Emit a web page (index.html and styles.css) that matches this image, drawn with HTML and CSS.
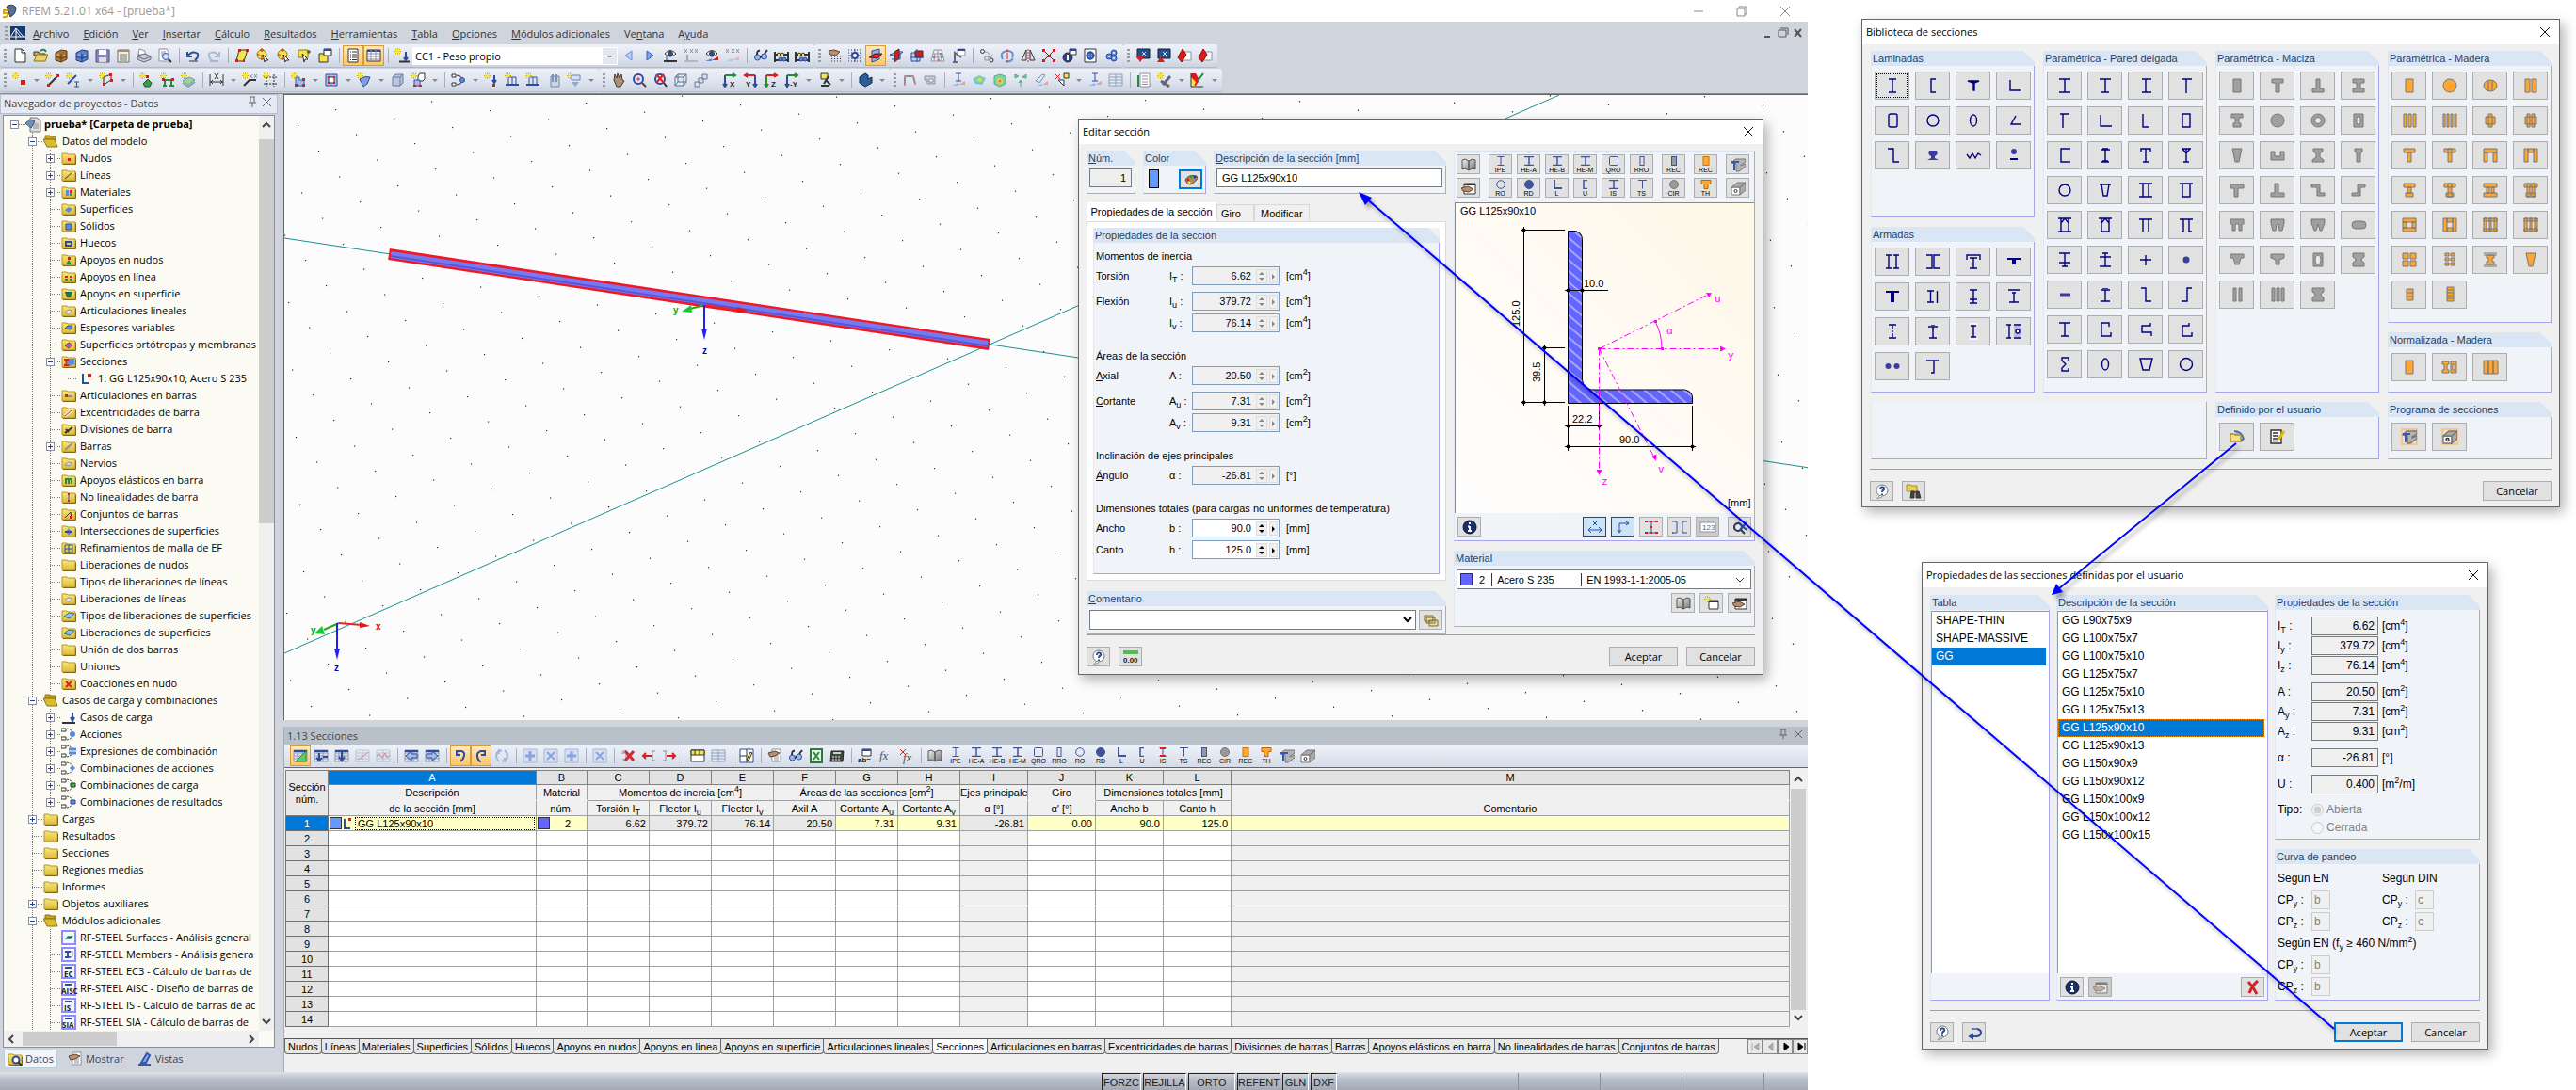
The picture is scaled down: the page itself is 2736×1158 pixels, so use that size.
FILE: index.html
```html
<!DOCTYPE html>
<html lang="es">
<head>
<meta charset="utf-8">
<title>RFEM 5.21.01 x64 - [prueba*]</title>
<link rel="stylesheet" href="styles.css">
</head>
<body>
<svg class="defs" aria-hidden="true">
<defs>
<linearGradient id="gf" x2="0" y2="1"><stop stop-color="#f8e878"/><stop offset="1" stop-color="#dcb93a"/></linearGradient>
<linearGradient id="gm" x2="1" y2="1"><stop stop-color="#eee"/><stop offset="1" stop-color="#777"/></linearGradient>
<pattern id="hatch" width="9" height="9" patternUnits="userSpaceOnUse" patternTransform="rotate(-50)"><rect width="9" height="9" fill="#6464ff"/><path d="M4 0v9" stroke="#e8e8ff"/></pattern>
</defs>
<symbol id="f"><path d="M1 3h5l1 1h8v10H1z" fill="url(#gf)" stroke="#b8951f"/><path d="M2 14.500h13.500v-9" stroke="#7d6a20"/></symbol>
<symbol id="fo"><path d="M2 2h5l1 1h5v3H2z" fill="#c8a620" stroke="#8b7518"/><path d="M0 6h12l3 8H4z" fill="#d9bd2e" stroke="#8b7518"/></symbol>
<symbol id="star"><path d="M3.500 0v7M0 3.500h7M1 1l5 5M6 1l-5 5" stroke="#c9b200"/><circle cx="3.500" cy="3.500" r="2" class="fy"/></symbol>
<symbol id="new"><path d="M3 1h7l4 4v10H3z" class="fw K"/><path d="M10 1v4h4" class="K"/></symbol>
<symbol id="open"><path d="M1 4h5l1 2h6v2H1z" fill="#d0b040" class="K"/><path d="M1 14l3-7h12l-3 7z" fill="#ead46a" stroke="#8b7518"/><path d="M8 3q4-3 6 1" class="G w2"/></symbol>
<symbol id="box"><path d="M2 5l6-3 6 1v9l-6 3-6-2z" fill="#a9743a" stroke="#5f3b14"/><path d="M8 6v9M2 9l6 2 6-2" stroke="#5f3b14"/><path d="M4 7h2M10 8h2" class="fy" stroke="#fd6"/></symbol>
<symbol id="boxb"><path d="M2 5l6-3 6 1v9l-6 3-6-2z" fill="#5a82d0" stroke="#1f3a7c"/><path d="M8 6v9M2 9l6 2 6-2" stroke="#1f3a7c"/><path d="M4 7h2M10 8h2" stroke="#dde"/></symbol>
<symbol id="save"><path d="M1 2h14v13H1z" fill="#8a84b8" stroke="#555080"/><path d="M4 2h8v5H4z" class="fw"/><path d="M4 10h8v5H4z" fill="#ddd"/></symbol>
<symbol id="list"><path d="M2 2h12v13H2z" fill="#f4efe6" stroke="#7b6a58"/><path d="M2 2h12v2H2z" fill="#a08c78"/><path d="M4 7h8M4 9h8M4 11h8M4 13h8" stroke="#777"/></symbol>
<symbol id="print"><path d="M3 1l6 2v5L2 7z" class="fw A"/><path d="M1 8l8-2 6 3v3l-7 3-7-3z" fill="#c8ccd8" stroke="#667"/><path d="M1 9l7 3 7-3" stroke="#667"/></symbol>
<symbol id="prev"><path d="M2 1h8l2 3v10H2z" class="fw A"/><path d="M4 4h5M4 6h5M4 8h3" class="A"/><circle cx="9" cy="9" r="3.500" fill="#cfe0ff" class="N"/><path d="M12 12l3 3" class="K w2"/></symbol>
<symbol id="undo"><path d="M2 4v5h5M2 9q5-7 11-3 1 4-3 7" class="N w2"/><path d="M4 14h9" class="K"/></symbol>
<symbol id="redo"><path d="M14 4v5H9M14 9q-5-7-11-3-1 4 3 7" stroke="#a9bcd0" stroke-width="2"/><path d="M4 14h9" class="A"/></symbol>
<symbol id="para"><path d="M5 2h9l-4 12H2z" class="fy K"/><path d="M1 12h3v3H1zM4 1h3v3H4zM12 1h3v3h-3zM9 12h2v3H9z" class="fr"/></symbol>
<symbol id="circ"><circle cx="7" cy="7" r="5" class="fy" stroke="#8a7a00"/><path d="M5 2h4M7 0v4M7 7v6M2 7h3" class="R"/><path d="M8 7l6 6h-3l-1 2z" class="fw K"/></symbol>
<symbol id="selr"><path d="M2 2h10v8H2z" class="fy" stroke="#8a7a00"/><path d="M11 4h4M13 2v4" class="K"/><path d="M6 6l6 6h-3l-1 3z" class="fw K"/></symbol>
<symbol id="win"><path d="M2 6h9v9H2z" class="fy K"/><path d="M7 1h8v7H7z" class="fw K"/><path d="M7 2h8" class="N w2"/></symbol>
<symbol id="tl"><path d="M3 1h10v14H3z" class="fw K"/><path d="M5 4h1M5 7h1M5 10h1M5 12.500h1M7 4h5M7 7h5M7 10h5M7 12.500h5" class="K"/></symbol>
<symbol id="tt"><path d="M1 2h14v12H1z" class="fw K"/><path d="M1 3h14" class="N w2"/><path d="M1 6h14M1 9h14M1 12h14M5 2v12M10 2v12" class="A"/></symbol>
<symbol id="ld"><use href="#star"/><path d="M5 14.500h11" class="K w2"/><path d="M12 4v9M10 10l2 3 2-3" class="N w2"/></symbol>
<symbol id="pl"><path d="M11 3v10L4 8z" fill="#b9cdf2" stroke="#6f90d2"/></symbol>
<symbol id="pr"><path d="M5 3v10l7-5z" fill="#7ba2ea" stroke="#3a62b8"/></symbol>
<symbol id="eye"><path d="M2 6q6-7 12 0-6 6-12 0z" class="fw K"/><circle cx="8" cy="6" r="2.500" fill="#244fb0" class="K"/><path d="M1 14h14" class="K w2"/><path d="M4 8v5" class="N"/></symbol>
<symbol id="eye2"><path d="M2 6q6-7 12 0-6 6-12 0z" class="fw K"/><circle cx="8" cy="6" r="2.500" fill="#244fb0" class="K"/><path d="M1 14h7V11z" class="fb"/><path d="M8 13h7v-4z" class="fr"/></symbol>
<symbol id="xx"><path d="M1 1l3 4M4 1L1 5M7 1l3 4M10 1L7 5M12 1l3 4M15 1l-3 4M1 14h14" class="A"/><path d="M4 7v6" stroke="#9ab" stroke-width="2"/></symbol>
<symbol id="xx2"><path d="M1 1l3 4M4 1L1 5M7 1l3 4M10 1L7 5M12 1l3 4M15 1l-3 4" class="A"/><path d="M1 14h7v-3z" fill="#b6c4ea"/><path d="M8 13h7V9z" fill="#eab6b6"/></symbol>
<symbol id="gl"><circle cx="4.500" cy="10" r="3" fill="#9db6ee" class="N"/><circle cx="11.500" cy="9" r="3" fill="#9db6ee" class="N"/><path d="M4 7q0-5 3-4M12 6q3-4 3-4M7 10l2-1" class="K w2"/></symbol>
<symbol id="ab"><path d="M1 4v11M15 4v11M1 7h14M1 13h14" class="K w2"/><circle cx="5" cy="7" r="1.800" class="fy K"/><circle cx="9" cy="7" r="1.800" class="fy K"/><circle cx="7" cy="12" r="2" class="fb N"/><circle cx="11" cy="12" r="2" class="fb N"/></symbol>
<symbol id="hg"><path d="M2 9h13M2 11.500h13M2 14h13" class="K" stroke-dasharray="1 2"/><path d="M2 3l6-1 6 2-4 4-6-1z" fill="#b98f6c" stroke="#5d4030"/></symbol>
<symbol id="sg"><path d="M1 2h14M1 5h14M1 11h14M1 14h14" class="K" stroke-dasharray="1 2"/><path d="M8 1v14M1 8h14" class="N"/><circle cx="8" cy="8" r="3" class="fw N w2"/></symbol>
<symbol id="pa"><path d="M4 3l8-2v11l-8 3z" fill="#8fb2f2" class="N"/><path d="M1 10l6-4h8l-5 5z" class="fr K"/></symbol>
<symbol id="pb"><path d="M1 7l8-3h6l-6 5z" fill="#bcd0f8" class="N"/><path d="M6 4l5-3v10l-5 4z" class="fr K"/><path d="M3 12h9V5" class="N"/></symbol>
<symbol id="pc"><path d="M2 5h9v9H2z" fill="#bcd0f8" class="N"/><path d="M6 3h8v7H6z" class="fr K"/><path d="M1 10h14M8 1v14" class="N"/></symbol>
<symbol id="ms"><path d="M4 2h8l3 12H1zM3 6h10M2 10h12M8 2v12M5 6l-1 8M11 6l1 8" fill="#e6eefb" stroke="#8899aa"/><path d="M3 9h2v2H3zM10 5h2v2h-2zM8 12h2v2H8z" fill="#e55"/></symbol>
<symbol id="cf"><path d="M7 1h8v7H7z" class="fw A"/><path d="M7 2h8" class="N w2"/><path d="M4 15V5l7 5M2 15h5" stroke="#667" stroke-width="2"/></symbol>
<symbol id="mv"><circle cx="3.500" cy="3.500" r="2" class="K"/><circle cx="13" cy="13" r="2" class="K"/><path d="M6 4q5 0 6 6M9 8l3 3 2-4M6 9h4v4H6z" class="A"/></symbol>
<symbol id="rt"><path d="M3 12q-4-7 4-9 9 0 6 7M6 14q5 2 8-3" stroke="#6b8fd0" stroke-width="2"/><path d="M8 1v14" class="R" stroke-dasharray="3 1"/></symbol>
<symbol id="mi"><path d="M6 2v11H1zM10 2v11h5z" fill="#dde" class="K"/><path d="M8 1v14" class="R" stroke-dasharray="2 1"/></symbol>
<symbol id="ix"><path d="M2 2l12 12M14 2L2 14" class="K"/><path d="M1 1h3v3H1zM12 1h3v3h-3zM1 12h3v3H1zM12 12h3v3h-3zM7 7h3v3H7z" class="fr"/></symbol>
<symbol id="in"><circle cx="8" cy="8" r="7" fill="#1b2f66" stroke="#0a1436"/><path d="M8 3v2M8 7v5M6 7.500h2M6 12h4" stroke="#fff" stroke-width="2"/></symbol>
<symbol id="iw"><circle cx="6" cy="10" r="5" fill="#2c4288" class="K"/><path d="M6 7v1M6 9v4" stroke="#fff" stroke-width="2"/><path d="M8 1h7v6H8z" class="fw K"/><path d="M8 2h7" class="N w2"/></symbol>
<symbol id="gp"><path d="M2 1h12v14H2z" class="fw K"/><circle cx="8" cy="8" r="3.500" fill="#7ba2ea" class="N w2"/><path d="M8 3v10M3 8h10" class="N"/></symbol>
<symbol id="gs"><circle cx="11" cy="5" r="3" class="fb N"/><circle cx="6" cy="9" r="3" class="fb N"/><circle cx="11" cy="11" r="3" class="fb N"/><circle cx="11" cy="5" r="1" class="fw"/><circle cx="6" cy="9" r="1" class="fw"/><circle cx="11" cy="11" r="1" class="fw"/></symbol>
<symbol id="d1"><path d="M2 1h13v10H2z" fill="#26508c" stroke="#123"/><path d="M7 4l2 2 2-2M7 8l2-2 2 2" stroke="#cfe0ff"/><path d="M1 9h8l-4 6z" class="fr"/></symbol>
<symbol id="d2"><path d="M2 1h13v10H2z" fill="#26508c" stroke="#123"/><path d="M7 4l2 2 2-2M7 8l2-2 2 2" stroke="#cfe0ff"/><path d="M1 15h8L5 9z" class="fr"/></symbol>
<symbol id="d3"><path d="M7 4h8v9H7z" class="fw A"/><path d="M6 1l4 6-5 8-4-5z" class="fr" stroke="#811"/></symbol>
<symbol id="nd"><use href="#star"/><path d="M9 8h5v5H9z" class="fr"/></symbol>
<symbol id="ln"><use href="#star"/><path d="M3 14L14 3" class="K w2"/><path d="M2 12h3v3H2zM12 2h3v3h-3z" class="fr"/></symbol>
<symbol id="mb"><use href="#star"/><path d="M2 12L11 3" class="N w2"/><path d="M9 10h5M11.500 10v5M9 15h5" class="N"/></symbol>
<symbol id="pg"><use href="#star"/><path d="M5 5l8-3v6l-8 5z" class="K"/><path d="M4 11h3v3H4zM11 1h3v3h-3zM12 7h3v3h-3z" class="fr"/></symbol>
<symbol id="ns"><use href="#star"/><path d="M9 7l4 4-2 4H6l-2-3z" fill="#3c9a4c" stroke="#185a24"/><path d="M7 3h3v3H7z" class="fr"/></symbol>
<symbol id="ls"><use href="#star"/><path d="M3 8h11M5 9v5M12 9v5M3 14h4M10 14h5" class="G w2"/><path d="M2 6h3v3H2zM12 6h3v3h-3z" class="fr"/></symbol>
<symbol id="ss"><use href="#star"/><path d="M2 9l7-4 6 3-7 5z" fill="#a8cf9f" stroke="#6a9a88"/><path d="M2 11l6 4 7-5" stroke="#7fa6b8" stroke-width="2"/></symbol>
<symbol id="dm"><path d="M1 2v12M15 2v12M1 10h14M4 8l-2 2 2 2M12 8l2 2-2 2M6 1l4 6M10 1L6 7" class="K"/></symbol>
<symbol id="dx"><use href="#star"/><path d="M8 2l3 4M11 2L8 6M13 2l3 4M16 2l-3 4" class="A"/><path d="M2 14l6-6h7" class="K w2"/></symbol>
<symbol id="gd"><path d="M1 5h14M1 12h14M4 2v13M12 2v13" class="K" stroke-dasharray="2 1"/><use href="#star"/></symbol>
<symbol id="sf"><use href="#star"/><path d="M5 5v9h9V8H9V5z" fill="#a6bcec" stroke="#4060a0"/><path d="M4 12h3v3H4zM12 12h3v3h-3zM12 6h3v3h-3z" class="fr"/></symbol>
<symbol id="op"><path d="M2 2h12v12H2z" fill="#a6bcec" class="N"/><path d="M5 5h6v6H5z" class="fw K"/><path d="M4 4h2v2H4zM10 10h2v2h-2zM10 4h2v2h-2zM4 10h2v2H4z" class="fr"/></symbol>
<symbol id="cs"><use href="#star"/><path d="M3 7q6-4 11-2l-3 7-4 3z" fill="#7f9fe2" class="N"/></symbol>
<symbol id="cb"><path d="M3 5l3-3h8v9l-3 3H3z" fill="#b8c6de" stroke="#66789a"/><path d="M3 5h8v9M11 5l3-3" stroke="#66789a"/></symbol>
<symbol id="cn"><use href="#star"/><path d="M8 4l2-3h5v6l-2 2H8z" class="fw K"/><path d="M4 8h6v6H4z" fill="#a6bcec" class="N"/><path d="M3 13h3v2H3zM9 13h3v2H9z" class="fr"/></symbol>
<symbol id="lc"><path d="M1 2h4v3H1zM1 11h4v3H1z" class="fw K"/><path d="M6 3q5 0 6 4M6 13q5 0 6-4" class="K"/><circle cx="12" cy="8" r="2.500" class="fb N"/></symbol>
<symbol id="na"><use href="#star"/><path d="M11 3v7M9 8l2 3 2-3" class="N w2"/><path d="M9 12h3v3H9z" class="fr"/></symbol>
<symbol id="ml"><path d="M1 13h14" class="N w2"/><path d="M4 5v7M8 5v7M12 5v7M4 5h8" class="N"/><use href="#star"/></symbol>
<symbol id="sl"><path d="M5 4h9v11H5z" fill="#c8d4e8" stroke="#7788a0"/><path d="M7 2v8M11 2v8" stroke="#7d93ba" stroke-width="2"/></symbol>
<symbol id="vl"><use href="#star"/><path d="M5 3h9v5H5z" fill="#d8e2f4" stroke="#6f86ae"/><path d="M5 10h8l-4 5z" fill="#8aa8dc"/></symbol>
<symbol id="hd"><path d="M3 8l1-6 2 4 1-5 2 5 2-4 1 6 2 1-4 6H6z" fill="#a99177" stroke="#4b3a2a"/></symbol>
<symbol id="zm"><circle cx="7" cy="7" r="5" fill="#dbe7ff" class="N w2"/><path d="M11 11l4 4" stroke="#732" stroke-width="2"/><path d="M5 7h4M7 5v4" class="R"/></symbol>
<symbol id="zx"><circle cx="8" cy="7" r="5" fill="#dbe7ff" class="N w2"/><path d="M12 11l3 4" class="K w2"/><path d="M4 2l8 9M12 2l-8 9" class="R w2"/></symbol>
<symbol id="zd"><circle cx="6" cy="8" r="4" fill="#dbe7ff" class="K w2"/><path d="M9 11l4 4" class="K w2"/><path d="M6 3l9 8M15 3L8 11" class="N w2"/></symbol>
<symbol id="bx"><path d="M2 5l3-3h9v8l-3 4H2zM2 5h9v9M11 5l3-3M5 2v8h9M2 14l3-4" fill="#e3eaf6" stroke="#5c6e92"/></symbol>
<symbol id="c3"><path d="M1 10h5v5H1zM5 6h5v5H5zM9 2h5v5H9z" fill="#d8e0ee" stroke="#66789a"/></symbol>
<symbol id="ax"><path d="M3 15V3M1 12l2 3 2-3" class="N w2"/><path d="M3 3h11M11 1l3 2-3 2" class="G w2"/></symbol>
<symbol id="ay"><path d="M13 15V3M11 12l2 3 2-3" class="N w2"/><path d="M13 3H2M5 1L2 3l3 2" class="R w2"/></symbol>
<symbol id="az"><path d="M3 15V3M1 12l2 3 2-3" class="G w2"/><path d="M3 3h11M11 1l3 2-3 2" class="R w2"/></symbol>
<symbol id="pn"><path d="M4 1h7v6H4z" class="fy K"/><path d="M12 4l-5 8M4 14h9M9 8l5 5" class="K w2"/></symbol>
<symbol id="cc"><path d="M2 5l6-4 3 2v4l4-2v6l-7 4-6-4z" fill="#2d5f96" stroke="#0e2748"/></symbol>
<symbol id="fr"><path d="M3 14V4h9l2 8" class="A w2"/><path d="M2 12h2v2H2zM2 3h2v2H2zM11 3h2v2h-2zM13 11h2v2h-2z" fill="#e58a8a"/></symbol>
<symbol id="ky"><path d="M2 4h11v8H5V8H2z" fill="#ccd" class="A"/><path d="M7 7h4v3H7z" class="fw A"/></symbol>
<symbol id="dg"><path d="M5 1h6M8 1v8M5 9h6" class="N"/><path d="M1 14h7v-3z" fill="#9fb0ee"/><path d="M8 13h7v-4z" fill="#ee9f9f"/></symbol>
<symbol id="is"><path d="M1 7l7-4 7 3-4 7-7-1z" fill="#66c8e8"/><path d="M3 8l6-4 4 3-3 4z" fill="#8fdc6a"/><path d="M5 8l4-2 2 2-2 2z" fill="#f2d34b"/></symbol>
<symbol id="ib"><path d="M2 4l6-2 6 2v8l-6 3-6-3z" fill="#7fd49a" stroke="#5a8"/><circle cx="8" cy="9" r="3" fill="#f2d34b"/><circle cx="8" cy="9" r="1.500" fill="#e66"/></symbol>
<symbol id="ga"><path d="M6 4l-4-2v4zM10 5l4-3v4zM8 8v7M6 11l2-3 2 3" fill="#7c9" stroke="#5a8"/></symbol>
<symbol id="sp"><path d="M2 9l7-7 3 1-6 8z" fill="#dbe4f4" stroke="#7f90b0"/><path d="M3 14h6v-2z" fill="#9fb0ee"/><path d="M9 13h6V9z" fill="#ee9f9f"/></symbol>
<symbol id="pk"><path d="M1 2l5 5M6 2L1 7" class="R"/><path d="M10 1h5v5h-5z" class="fy K"/><path d="M4 8h6v6z" class="fw K"/></symbol>
<symbol id="gr"><path d="M1 2h14v12H1zM1 5h14M1 8h14M1 11h14M8 2v12" fill="#e4eaf4" stroke="#8fa0be"/></symbol>
<symbol id="gk"><path d="M1 2h14v12H1zM1 5h14M1 8h14M1 11h14M5 2v12M10 2v12" fill="#dfe8f6" stroke="#8c99ad"/><path d="M1 3h14" class="N w2"/></symbol>
<symbol id="rp"><path d="M4 1h10v14H4z" class="fw A"/><path d="M6 4h6M6 7h6M6 10h6M6 12.500h6" class="A"/><path d="M2 3v12" class="G w2"/></symbol>
<symbol id="wr"><use href="#star"/><path d="M6 13l8-9M4 9l9 6" stroke="#667" stroke-width="3"/></symbol>
<symbol id="cl"><path d="M1 1h5l4 7-4 6H1z" class="fr"/><path d="M1 5l5 5-2 5H1z" class="fy"/><path d="M1 1v14h13" class="K"/><path d="M8 9l6-8" class="G w2"/></symbol>
<symbol id="aL"><path d="M14 6H8V3L2 8l6 5v-3h6z" fill="#a6bcec" class="N"/></symbol>
<symbol id="aR"><path d="M2 6h6V3l6 5-6 5v-3H2z" fill="#a6bcec" class="N"/></symbol>
<symbol id="uL"><path d="M4 3h5q4 1 3 5-1 4-4 6M4 2v5h4" class="N w2"/></symbol>
<symbol id="uR"><path d="M12 3H8Q3 4 4 9t4 5M12 2v5H8" class="N w2"/></symbol>
<symbol id="rf"><path d="M5 2q-6 6 0 12M11 2q6 6 0 12M8 3L5 2v4M8 13l3 1v-4" stroke="#a6b8d8" stroke-width="2"/></symbol>
<symbol id="ps"><path d="M1 1h14v14H1z" fill="#d6e0f2" stroke="#aab8d0"/><path d="M8 3v10M3 8h10" stroke="#8aa4e0" stroke-width="3"/></symbol>
<symbol id="mu"><path d="M1 1h14v14H1z" fill="#d6e0f2" stroke="#aab8d0"/><path d="M4 4l8 8M12 4l-8 8" stroke="#8aa4e0" stroke-width="2"/></symbol>
<symbol id="xr"><path d="M2 3h4v9H2M1 5h5" class="A"/><path d="M5 3l9 10M14 3L5 13" stroke="#d22a2a" stroke-width="3"/></symbol>
<symbol id="x1"><path d="M12 2v12M12 3h3M12 13h3" class="A"/><path d="M11 8H2M5 5L2 8l3 3" class="R w2"/></symbol>
<symbol id="x2"><path d="M4 2v12M1 3h3M1 13h3" class="A"/><path d="M5 8h9M11 5l3 3-3 3" class="R w2"/></symbol>
<symbol id="ty"><path d="M1 2h14v12H1z" class="fw K"/><path d="M1 2h14v5H1z" class="fy K"/><path d="M5 2v5M10 2v5" class="K"/></symbol>
<symbol id="bo"><path d="M1 1h14v14H1z" class="fw N"/><path d="M8 1v14M1 8h7" class="K"/><path d="M8 12l4-8 2 1-4 8z" class="fy K"/></symbol>
<symbol id="ha"><path d="M5 1h9v13H5z" class="fw A"/><path d="M7 8h5M7 10h5M7 12h5" class="A"/><path d="M1 5l7-2 5 2-5 3-5 1z" fill="#b98f6c" stroke="#5d4030"/></symbol>
<symbol id="xl"><path d="M2 1h12v14H2z" fill="#e5f4e5" stroke="#2b7c3c" stroke-width="2"/><path d="M5 4l6 8M11 4l-6 8" class="G w2"/></symbol>
<symbol id="ca"><path d="M2 3h13l-1 11H1z" fill="#444" stroke="#222"/><path d="M4 5h8" stroke="#bdb" stroke-width="2"/><path d="M3 9h9M3 12h9" stroke="#eee" stroke-dasharray="2 1"/></symbol>
<symbol id="bk"><path d="M1 3l3-1 4 2v10l-4-2-3 1zM15 3l-3-1-4 2v10l4-2 3 1z" fill="url(#gm)" stroke="#555"/></symbol>
<symbol id="hn"><path d="M3 3h12v11H3z" class="fw K"/><path d="M3 4h12" class="K w2"/><path d="M0 8l7-2 6 3-5 3-6-1z" fill="#b98f6c" stroke="#5d4030"/></symbol>
<symbol id="s1"><path d="M1 6l4-4h11v3l-5 3v1l5-2v3l-7 5H6V7z" fill="#b4b4b4" stroke="#777"/><path d="M1 5h8M4 5v9" stroke="#3558b0" stroke-width="2"/></symbol>
<symbol id="s2"><path d="M1 7h9v8H1z" class="fw" stroke="#777"/><path d="M1 7l6-5h9l-6 5zM10 7l6-5v8l-6 5z" fill="#aaa" stroke="#777"/><circle cx="5.500" cy="11" r="1.500" stroke="#333"/></symbol>
<symbol id="hp"><circle cx="8" cy="7" r="6" class="fw" stroke="#777"/><path d="M5 13l-2 3 5-2" class="fw A"/><path d="M6 6q0-3 2.500-2.500T10 6q-2 1-2 3M8 10.500v1.500" class="N w2"/></symbol>
<symbol id="un"><path d="M5 4h6q4 1 4 4t-4 4H3M3 12l3-2v4z" class="N w2"/><path d="M5 4h6" stroke="#9db6ee"/></symbol>
<symbol id="p1"><path d="M3.500.5h7M7 .5v9M3.500 9.500h7"/></symbol>
<symbol id="p2"><path d="M2 .5h10M7 .5v9M2 9.500h10" stroke-width="1.500"/></symbol>
<symbol id="p3"><rect x="2.500" y=".5" width="9" height="9" rx="1"/></symbol>
<symbol id="p4"><rect x="5" y=".5" width="4" height="9"/></symbol>
<symbol id="p5"><circle cx="7" cy="5" r="4.300"/></symbol>
<symbol id="p6"><circle cx="7" cy="5" r="4.500" fill="#40549c"/></symbol>
<symbol id="p7"><path d="M4 0v9h8" stroke-width="2"/></symbol>
<symbol id="p8"><path d="M9 .5H5v9h4" stroke-width="1.500"/></symbol>
<symbol id="p9"><path d="M3 .5h9M7.500 .5v9"/></symbol>
<symbol id="pa1"><rect x="4.500" y=".5" width="5" height="9" fill="#999"/></symbol>
<symbol id="pa2"><circle cx="7" cy="5" r="4.500" fill="#999" stroke="#777"/></symbol>
<symbol id="pa3"><rect x="4" y=".5" width="6" height="9" fill="#fa3" stroke="#c70"/></symbol>
<symbol id="pa4"><path d="M2 .5h10v4H9v5H5v-5H2z" fill="#fa3" stroke="#b60"/></symbol>
<symbol id="mod"><path d="M1 1h14v14H1z" fill="#f4f6fb" stroke="#8c8cff" stroke-width="2"/></symbol>
<symbol id="cmb"><path d="M0 2h5v3H0zM0 11h5v3H0z" class="fw K"/><path d="M6 2q5 1 6 4M6 14q5-1 6-4" class="K" stroke-dasharray="2 1"/></symbol>
</svg>

<div class="page">
<main class="app">
  <header class="title"><svg><path d="M5 3q6-4 10 1 0 7-6 10z" fill="#5a6c98" stroke="#2a3550"/><path d="M7 7H2v3q5-1 4 2-1 3-5 2" stroke="#d9a400" stroke-width="2"/></svg><span>RFEM 5.21.01 x64 - [prueba*]</span>
    <div class="wb"><button><svg><path d="M3 8h10"/></svg></button><button><svg><path d="M3 5h8v8H3zM5 5V3h8v8h-2"/></svg></button><button><svg><path d="M3 3l10 10M13 3L3 13"/></svg></button></div></header>
  <nav class="menu"><i class="grip"></i><svg><path d="M0 1h16v14H0z" fill="#1c3a72"/><path d="M0 12h16M6 3v12M6 3L1 11M6 3l8 9M6 6l5 6" stroke="#fff"/></svg>
    <a href="#"><u>A</u>rchivo</a><a href="#"><u>E</u>dición</a><a href="#"><u>V</u>er</a><a href="#"><u>I</u>nsertar</a><a href="#"><u>C</u>álculo</a><a href="#"><u>R</u>esultados</a><a href="#"><u>H</u>erramientas</a><a href="#"><u>T</u>abla</a><a href="#"><u>O</u>pciones</a><a href="#"><u>M</u>ódulos adicionales</a><a href="#">Ve<u>n</u>tana</a><a href="#">A<u>y</u>uda</a>
    <div class="mdi"><svg><path d="M4 12h6" class="w2"/></svg><svg><path d="M3 5h8v7H3zM5 3h8v7" /></svg><svg><path d="M4 4l7 8M11 4l-7 8" class="w2"/></svg></div></nav>

  <div class="bars">
   <div class="bar"><i class="grip"></i><button><svg><use href="#new"/></svg></button><button><svg><use href="#open"/></svg></button><button><svg><use href="#box"/></svg></button><button><svg><use href="#boxb"/></svg></button><button><svg><use href="#save"/></svg></button><button><svg><use href="#list"/></svg></button><button><svg><use href="#print"/></svg></button><button><svg><use href="#prev"/></svg></button><i class="sep"></i><button><svg><use href="#undo"/></svg></button><button><svg><use href="#redo"/></svg></button><i class="sep"></i><button><svg><use href="#para"/></svg></button><button><svg><use href="#circ"/></svg></button><button><svg><use href="#circ"/></svg></button><button><svg><use href="#selr"/></svg></button><button><svg><use href="#win"/></svg></button><i class="sep"></i><button class="on"><svg><use href="#tl"/></svg></button><button class="on"><svg><use href="#tt"/></svg></button><i class="sep"></i><button><svg><use href="#ld"/></svg></button><select class="lc" aria-label="Caso de carga"><option>CC1 - Peso propio</option></select><button><svg><use href="#pl"/></svg></button><button><svg><use href="#pr"/></svg></button><button><svg><use href="#eye"/></svg></button><button><svg><use href="#xx"/></svg></button><button><svg><use href="#eye2"/></svg></button><button><svg><use href="#xx2"/></svg></button><i class="sep"></i><button><svg><use href="#gl"/></svg></button><button><svg><use href="#ab"/></svg></button><button><svg><use href="#ab"/></svg></button></div>
   <div class="bar"><i class="grip"></i><button><svg><use href="#hg"/></svg></button><button><svg><use href="#sg"/></svg></button><button class="on"><svg><use href="#pa"/></svg></button><button><svg><use href="#pb"/></svg></button><button><svg><use href="#pc"/></svg></button><button><svg><use href="#ms"/></svg></button><button><svg><use href="#cf"/></svg></button><i class="sep"></i><button><svg><use href="#mv"/></svg></button><button><svg><use href="#rt"/></svg></button><button><svg><use href="#mi"/></svg></button><button><svg><use href="#ix"/></svg></button><button><svg><use href="#iw"/></svg></button><button><svg><use href="#gp"/></svg></button><button><svg><use href="#gs"/></svg></button></div>
   <div class="bar"><i class="grip"></i><button><svg><use href="#d1"/></svg></button><button><svg><use href="#d2"/></svg></button><button><svg><use href="#d3"/></svg></button><button><svg><use href="#d3"/></svg></button></div>
  </div>
  <div class="bars">
   <div class="bar"><i class="grip"></i><button><svg><use href="#nd"/></svg></button><button class="dd"></button><button><svg><use href="#ln"/></svg></button><button><svg><use href="#mb"/></svg></button><button class="dd"></button><button><svg><use href="#pg"/></svg></button><button class="dd"></button><i class="sep"></i><button><svg><use href="#ns"/></svg></button><button><svg><use href="#ls"/></svg></button><button><svg><use href="#ss"/></svg></button><i class="sep"></i><button><svg><use href="#dm"/></svg></button><button class="dd"></button><button><svg><use href="#dx"/></svg></button><button><svg><use href="#gd"/></svg></button><i class="sep"></i><button><svg><use href="#sf"/></svg></button><button class="dd"></button><button><svg><use href="#op"/></svg></button><button class="dd"></button><button><svg><use href="#cs"/></svg></button><button class="dd"></button><button><svg><use href="#cb"/></svg></button><button><svg><use href="#cn"/></svg></button><button class="dd"></button><i class="sep"></i><button><svg><use href="#lc"/></svg></button><button class="dd"></button><button><svg><use href="#na"/></svg></button><button><svg><use href="#ml"/></svg></button><button><svg><use href="#ml"/></svg></button><button><svg><use href="#sl"/></svg></button><button><svg><use href="#vl"/></svg></button><button class="dd"></button></div>
   <div class="bar"><i class="grip"></i><button><svg><use href="#hd"/></svg></button><button><svg><use href="#zm"/></svg></button><button><svg><use href="#zx"/></svg></button><button><svg><use href="#bx"/></svg></button><button><svg><use href="#c3"/></svg></button><i class="sep"></i><button><svg><use href="#ax"/><text x="8" y="15" class="tk">X</text></svg></button><button><svg><use href="#ay"/><text x="3" y="15" class="tk">Y</text></svg></button><button><svg><use href="#az"/><text x="8" y="15" class="tk">Z</text></svg></button><button><svg><use href="#ax"/><text x="6" y="15" class="tk">-Y</text></svg></button><button class="dd"></button><button><svg><use href="#pn"/></svg></button><button class="dd"></button><i class="sep"></i><button><svg><use href="#cc"/></svg></button><button class="dd"></button></div>
   <div class="bar"><i class="grip"></i><button><svg><use href="#fr"/></svg></button><button><svg><use href="#ky"/></svg></button><i class="sep"></i><button><svg><use href="#dg"/></svg></button><button><svg><use href="#is"/></svg></button><button><svg><use href="#ib"/></svg></button><button><svg><use href="#ga"/></svg></button><button><svg><use href="#sp"/></svg></button><button><svg><use href="#pk"/></svg></button><button class="dd"></button><button><svg><use href="#dg"/></svg></button><button><svg><use href="#gr"/></svg></button><i class="sep"></i><button><svg><use href="#rp"/></svg></button><button><svg><use href="#wr"/></svg></button><button class="dd"></button><button><svg><use href="#cl"/></svg></button><button class="dd"></button></div>
  </div>

  <div class="work">
   <aside class="nav">
    <h2>Navegador de proyectos - Datos<span><svg><path d="M5 2h6M6 2v6M10 2v6M4 8h8M8 8v5"/></svg><svg><path d="M3 3l9 9M12 3l-9 9"/></svg></span></h2>
    <div class="tree">
     <ul>
      <li class="l0"><i class="e m"></i><svg><path d="M5 1h7l4 3v12H5z" fill="#ddd" stroke="#777"/><path d="M8 8h6M8 10h6M8 12h6" class="A"/><path d="M0 7l5-4 5 2-4 7z" fill="#6f8fc4" stroke="#456"/></svg><b>prueba* [Carpeta de prueba]</b>
      <li class="l1"><i class="e m"></i><svg><use href="#fo"/></svg>Datos del modelo
      <li><i class="e p"></i><svg><use href="#f"/><path d="M7 8h3v3H7z" class="fr"/></svg>Nudos
      <li><i class="e p"></i><svg><use href="#f"/><path d="M4 12l8-7" class="K"/></svg>Líneas
      <li><i class="e p"></i><svg><use href="#f"/><path d="M5 6h3v6H5z" class="fb"/><path d="M9 6h3v3H9z" class="fr"/><path d="M9 9h3v3H9z" fill="#393"/></svg>Materiales
      <li><i class="e"></i><svg><use href="#f"/><path d="M4 9l4-3 4 2-4 4z" class="fb"/></svg>Superficies
      <li><i class="e"></i><svg><use href="#f"/><path d="M5 6h6v6H5z" class="fb N"/></svg>Sólidos
      <li><i class="e"></i><svg><use href="#f"/><path d="M5 7h6v4H5z" class="w2 N"/></svg>Huecos
      <li><i class="e"></i><svg><use href="#f"/><path d="M5 13l3-5 3 5z" fill="#283"/><path d="M7 5h3v3H7z" class="fr"/></svg>Apoyos en nudos
      <li><i class="e"></i><svg><use href="#f"/><path d="M4 7h3v2H4zM9 7h3v2H9z" class="fr"/><path d="M4 11h3M9 11h3" class="G w2"/></svg>Apoyos en línea
      <li><i class="e"></i><svg><use href="#f"/><path d="M4 6h8l-2 6H6z" fill="#274"/><path d="M4 7h5" class="N"/></svg>Apoyos en superficie
      <li><i class="e"></i><svg><use href="#f"/><path d="M4 10l4-3 4 1-4 3z" fill="#eef" class="A"/></svg>Articulaciones lineales
      <li><i class="e"></i><svg><use href="#f"/><path d="M4 9l3-3h5l-2 4z" class="fb N"/></svg>Espesores variables
      <li><i class="e"></i><svg><use href="#f"/><path d="M4 9l4-3 4 2-4 4z" class="fb R"/></svg>Superficies ortótropas y membranas
      <li><i class="e m"></i><svg><use href="#f"/><path d="M6 5h8v6l-6 2z" class="fb"/><path d="M3 6h5M5.500 6v6M3 12h5" class="R w2"/></svg>Secciones
      <li class="l3"><i class="e"></i><svg><path d="M4 3v10h6" class="N w2"/><path d="M9 3h4v4H9z" class="fr"/></svg>1: GG L125x90x10; Acero S 235
      <li><i class="e"></i><svg><use href="#f"/><path d="M4 9h8" class="A w2"/><path d="M4 7h3v3H4z" class="fr"/></svg>Articulaciones en barras
      <li><i class="e"></i><svg><use href="#f"/><path d="M4 12l7-6" stroke="#eee" stroke-width="3"/><path d="M4 12l7-6" class="R"/></svg>Excentricidades de barra
      <li><i class="e"></i><svg><use href="#f"/><path d="M4 12l8-6M5 8l3 3" class="K w2"/></svg>Divisiones de barra
      <li><i class="e p"></i><svg><use href="#f"/><path d="M4 12l8-7" class="A w2"/></svg>Barras
      <li><i class="e"></i><svg><use href="#f"/><path d="M4 10l4-3 4 1-4 3z" fill="#ddd" class="A"/></svg>Nervios
      <li><i class="e"></i><svg><use href="#f"/><path d="M4 7h8M5 8v4M8 8v4M11 8v4" class="G w2"/></svg>Apoyos elásticos en barra
      <li><i class="e"></i><svg><use href="#f"/><path d="M8 4v9" class="A w2"/><path d="M7 4h2v2H7zM7 11h2v2H7z" class="fr"/></svg>No linealidades de barra
      <li><i class="e"></i><svg><use href="#f"/><path d="M4 12l6-6 1 6" class="K"/><path d="M9 10h3v3H9z" class="fr"/></svg>Conjuntos de barras
      <li><i class="e"></i><svg><use href="#f"/><path d="M8 5l3 4-3 4-3-4z" class="fb"/><path d="M4 9h8" class="N w2"/></svg>Intersecciones de superficies
      <li><i class="e"></i><svg><use href="#f"/><path d="M4 5h8v8H4zM8 5v8M4 9h8" class="N"/></svg>Refinamientos de malla de EF
      <li><i class="e"></i><svg><use href="#f"/></svg>Liberaciones de nudos
      <li><i class="e"></i><svg><use href="#f"/></svg>Tipos de liberaciones de líneas
      <li><i class="e"></i><svg><use href="#f"/><path d="M4 10l4-3 4 1-4 3z" fill="#eef" class="A"/></svg>Liberaciones de líneas
      <li><i class="e"></i><svg><use href="#f"/><path d="M3 9l5-4 6 1-5 5z" fill="#8bc4e8" stroke="#468"/></svg>Tipos de liberaciones de superficies
      <li><i class="e"></i><svg><use href="#f"/><path d="M3 9l5-4 6 1-5 5z" fill="#8bc4e8" stroke="#468"/></svg>Liberaciones de superficies
      <li><i class="e"></i><svg><use href="#f"/></svg>Unión de dos barras
      <li><i class="e"></i><svg><use href="#f"/></svg>Uniones
      <li><i class="e"></i><svg><use href="#f"/><path d="M5 6l6 6M11 6l-6 6" class="R w2"/></svg>Coacciones en nudo
      <li class="l1"><i class="e m"></i><svg><use href="#fo"/></svg>Casos de carga y combinaciones
      <li><i class="e p"></i><svg><path d="M1 14h14" class="K w2"/><path d="M12 3v8M10 8l2 4 2-4" class="N w2"/></svg>Casos de carga
      <li><i class="e p"></i><svg><use href="#cmb"/><circle cx="12" cy="8" r="3" class="fb"/></svg>Acciones
      <li><i class="e p"></i><svg><use href="#cmb"/><path d="M8 6h8M8 10h8" stroke="#5b8be0" stroke-width="3"/></svg>Expresiones de combinación
      <li><i class="e p"></i><svg><use href="#cmb"/><path d="M12 5l3 3-3 3-3-3z" class="fb"/></svg>Combinaciones de acciones
      <li><i class="e p"></i><svg><use href="#cmb"/><path d="M10 6h5v4h-5z" fill="#3b4" class="K"/></svg>Combinaciones de carga
      <li><i class="e p"></i><svg><use href="#cmb"/><path d="M10 6h5v4h-5z" class="fb N"/></svg>Combinaciones de resultados
      <li class="l1"><i class="e p"></i><svg><use href="#f"/></svg>Cargas
      <li class="l1"><i class="e"></i><svg><use href="#f"/></svg>Resultados
      <li class="l1"><i class="e"></i><svg><use href="#f"/></svg>Secciones
      <li class="l1"><i class="e"></i><svg><use href="#f"/></svg>Regiones medias
      <li class="l1"><i class="e"></i><svg><use href="#f"/></svg>Informes
      <li class="l1"><i class="e p"></i><svg><use href="#f"/></svg>Objetos auxiliares
      <li class="l1"><i class="e m"></i><svg><use href="#fo"/></svg>Módulos adicionales
      <li><i class="e"></i><svg><use href="#mod"/><path d="M4 10l3-4h6l-3 4z" fill="#3b6"/><path d="M6 8h5" class="N w2"/></svg>RF-STEEL Surfaces - Análisis general
      <li><i class="e"></i><svg><use href="#mod"/><path d="M4 5h6M7 5v6M4 11h6" class="N w2"/><path d="M10 5l2-1v6l-4 2" class="A"/></svg>RF-STEEL Members - Análisis genera
      <li><i class="e"></i><svg><use href="#mod"/><path d="M4 4h7" class="N w2"/><text x="3" y="14" class="tk">EC</text></svg>RF-STEEL EC3 - Cálculo de barras de
      <li><i class="e"></i><svg><use href="#mod"/><path d="M4 4h7" class="N w2"/><text x="0" y="14" class="tk">AISC</text></svg>RF-STEEL AISC - Diseño de barras de
      <li><i class="e"></i><svg><use href="#mod"/><path d="M4 4h7" class="N w2"/><text x="3" y="14" class="tk">IS</text></svg>RF-STEEL IS - Cálculo de barras de ac
      <li><i class="e"></i><svg><use href="#mod"/><path d="M4 4h7" class="N w2"/><text x="1" y="14" class="tk">SIA</text></svg>RF-STEEL SIA - Cálculo de barras de
     </ul>
     <div class="vs"><svg><path d="M4 10l4-4 4 4"/></svg><i></i><svg><path d="M4 6l4 4 4-4"/></svg></div>
     <div class="hs"><svg><path d="M10 4L6 8l4 4"/></svg><i></i><svg><path d="M6 4l4 4-4 4"/></svg></div>
    </div>
    <div class="ntabs"><button class="cur"><svg><use href="#f"/><circle cx="9" cy="9" r="3.500" class="fw N w2"/><path d="M11 11l4 4" class="K w2"/></svg>Datos</button><button><svg><use href="#ha"/></svg>Mostrar</button><button><svg><path d="M1 14h13M4 12l6-10 3 2-4 8z" fill="#8fa8e8" stroke="#3558b0" stroke-width="2"/></svg>Vistas</button></div>
   </aside>

   <section class="main">
    <div class="view">
     <svg>
      <defs><path id="rows" d="M-64-263l1800 276M-42-236l1800 276M-82-218l1800 276" stroke="#222" stroke-width="1.200" stroke-dasharray="1.200 61.520"/></defs>
      <use href="#rows"/><use href="#rows" x="4" y="71.500"/><use href="#rows" x="8" y="143"/><use href="#rows" x="12" y="214.500"/><use href="#rows" x="16" y="286"/><use href="#rows" x="20" y="357.500"/><use href="#rows" x="24" y="429"/><use href="#rows" x="28" y="500.500"/><use href="#rows" x="32" y="572"/><use href="#rows" x="36" y="643.500"/><use href="#rows" x="40" y="715"/><use href="#rows" x="44" y="786.500"/><use href="#rows" x="48" y="858"/>
      <path d="M0 152L1620 396M0 593L1354 0" stroke="#1b9090"/>
      <path d="M111 169L749 265" stroke="#f01828" stroke-width="12"/><path d="M113 169.500L747 264.500" stroke="#7878f0" stroke-width="7"/><path d="M113 171L747 266.500" stroke="#5656d8" stroke-width="2"/>
      <g stroke-width="2"><path d="M447 223l34 5" stroke="#e22"/><path d="M481 225l12 4-12 2z" class="fr"/><path d="M447 223l-16 4" stroke="#2a2"/><path d="M432 223l-10 7 11 1z" fill="#1c3"/><path d="M446 223v26" stroke="#22e"/><path d="M443 248h6l-3 12z" fill="#22f"/><path d="M58 561l24 2" stroke="#e22"/><path d="M80 560l11 4-11 2z" class="fr"/><path d="M58 561l-16 7" stroke="#2a2"/><path d="M40 564l-8 8 11 1z" fill="#1c3"/><path d="M56 561v28" stroke="#22e"/><path d="M53 588h6l-3 12z" fill="#22f"/></g>
      <g class="axl"><text x="413" y="232" fill="#0a0">y</text><text x="444" y="275" fill="#00c">z</text><text x="97" y="568" fill="#d00">x</text><text x="28" y="572" fill="#0a0">y</text><text x="53" y="612" fill="#00c">z</text></g>
     </svg>
    </div>

    <div class="panel">
     <h2>1.13 Secciones<span><svg><path d="M5 3h6M6 3v6M10 3v6M4 9h8M8 9v4"/></svg><svg><path d="M4 4l8 8M12 4l-8 8"/></svg></span></h2>
     <div class="pbar"><button class="on"><svg><use href="#gk"/><path d="M3 14L14 3v11z" fill="#6c6" class="G"/></svg></button><button><svg><use href="#gk"/><path d="M6 5v8M3 10l3 3 3-3M10 9h5" class="N w2"/></svg></button><button><svg><use href="#gk"/><path d="M8 4v8M5 9l3 4 3-4" class="N w2"/></svg></button><button class="off"><svg><use href="#gr"/><path d="M3 12l5-3 6-5" class="R"/></svg></button><button class="off"><svg><use href="#gr"/><path d="M1 8l3-2 3 4 3-5 2 5 3-3" class="R"/></svg></button><i class="sep"></i><button><svg><use href="#gk"/><use href="#aL"/></svg></button><button><svg><use href="#gk"/><use href="#aR"/></svg></button><i class="sep"></i><button class="on"><svg><use href="#uL"/></svg></button><button class="on"><svg><use href="#uR"/></svg></button><button><svg><use href="#rf"/></svg></button><i class="sep"></i><button><svg><use href="#ps"/></svg></button><button><svg><use href="#mu"/></svg></button><button><svg><use href="#ps"/></svg></button><i class="sep"></i><button><svg><use href="#mu"/></svg></button><i class="sep"></i><button><svg><use href="#xr"/></svg></button><button><svg><use href="#x1"/></svg></button><button><svg><use href="#x2"/></svg></button><i class="sep"></i><button><svg><use href="#ty"/></svg></button><button><svg><use href="#gr"/></svg></button><i class="sep"></i><button><svg><use href="#bo"/></svg></button><i class="sep"></i><button><svg><use href="#ha"/></svg></button><button><svg><use href="#gl"/></svg></button><button><svg><use href="#xl"/></svg></button><button><svg><use href="#ca"/></svg></button><i class="sep"></i><button><svg><path d="M5 1h9v7H5z" class="fw K"/><path d="M5 2h9" class="N w2"/><text x="0" y="15" class="tk">ab=</text></svg></button><button><svg><text x="1" y="12" class="fx">fx</text></svg></button><button><svg><text x="4" y="14" class="fx">fx</text><path d="M1 1l6 6M7 1L1 7" class="R"/></svg></button><i class="sep"></i><button><svg><use href="#bk"/></svg></button>
      <button class="pf"><svg><use href="#p1"/></svg>IPE</button><button class="pf"><svg><use href="#p2"/></svg>HE-A</button><button class="pf"><svg><use href="#p2"/></svg>HE-B</button><button class="pf"><svg><use href="#p2"/></svg>HE-M</button><button class="pf"><svg><use href="#p3"/></svg>QRO</button><button class="pf"><svg><use href="#p4"/></svg>RRO</button><button class="pf"><svg><use href="#p5"/></svg>RO</button><button class="pf"><svg><use href="#p6"/></svg>RD</button><button class="pf"><svg><use href="#p7"/></svg>L</button><button class="pf"><svg><use href="#p8"/></svg>U</button><button class="pf"><svg><use href="#p1"/><path d="M4 1h6M4 9h6" class="R w2"/></svg>IS</button><button class="pf"><svg><use href="#p9"/></svg>TS</button><button class="pf"><svg><use href="#pa1"/></svg>REC</button><button class="pf"><svg><use href="#pa2"/></svg>CIR</button><button class="pf"><svg><use href="#pa3"/></svg>REC</button><button class="pf"><svg><use href="#pa4"/></svg>TH</button><button><svg><use href="#s1"/></svg></button><button><svg><use href="#s2"/></svg></button></div>
     <div class="sheet">
      <table>
       <colgroup><col class="c0"><col class="cA"><col class="cB"><col class="cC"><col class="cC"><col class="cC"><col class="cC"><col class="cC"><col class="cC"><col class="cI"><col class="cI"><col class="cI"><col class="cI"><col></colgroup>
       <thead>
        <tr class="let"><th rowspan="3" class="cn">Sección<br>núm.<th class="sel">A<th>B<th>C<th>D<th>E<th>F<th>G<th>H<th>I<th>J<th>K<th>L<th>M
        <tr><th class="nb">Descripción<th class="nb">Material<th colspan="3">Momentos de inercia [cm<sup>4</sup>]<th colspan="3">Áreas de las secciones [cm<sup>2</sup>]<th class="nb">Ejes principales<th class="nb">Giro<th colspan="2">Dimensiones totales [mm]<th class="nb">
        <tr><th>de la sección [mm]<th>núm.<th>Torsión I<sub>T</sub><th>Flector I<sub>u</sub><th>Flector I<sub>v</sub><th>Axil A<th>Cortante A<sub>u</sub><th>Cortante A<sub>y</sub><th>α [°]<th>α' [°]<th>Ancho b<th>Canto h<th>Comentario
       <tbody>
        <tr class="r1"><th>1<td class="y first"><div><i class="sw"></i><svg><path d="M2 3v10h6" class="N w2"/><path d="M6 2h3v3H6z" class="fr"/></svg><span>GG L125x90x10</span></div><td class="y first"><div><i class="sw v"></i><em>2</em></div><td>6.62<td>379.72<td>76.14<td>20.50<td class="y">7.31<td class="y">9.31<td>-26.81<td class="y">0.00<td class="y">90.0<td class="y">125.0<td class="y">
        <tr><th>2<td><td><td><td><td><td><td><td><td><td><td><td><td>
        <tr><th>3<td><td><td><td><td><td><td><td><td><td><td><td><td>
        <tr><th>4<td><td><td><td><td><td><td><td><td><td><td><td><td>
        <tr><th>5<td><td><td><td><td><td><td><td><td><td><td><td><td>
        <tr><th>6<td><td><td><td><td><td><td><td><td><td><td><td><td>
        <tr><th>7<td><td><td><td><td><td><td><td><td><td><td><td><td>
        <tr><th>8<td><td><td><td><td><td><td><td><td><td><td><td><td>
        <tr><th>9<td><td><td><td><td><td><td><td><td><td><td><td><td>
        <tr><th>10<td><td><td><td><td><td><td><td><td><td><td><td><td>
        <tr><th>11<td><td><td><td><td><td><td><td><td><td><td><td><td>
        <tr><th>12<td><td><td><td><td><td><td><td><td><td><td><td><td>
        <tr><th>13<td><td><td><td><td><td><td><td><td><td><td><td><td>
        <tr><th>14<td><td><td><td><td><td><td><td><td><td><td><td><td>
      </table>
      <div class="vs"><svg><path d="M4 10l4-4 4 4"/></svg><i></i><svg><path d="M4 6l4 4 4-4"/></svg></div>
     </div>
     <div class="stabs"><button>Nudos</button><button>Líneas</button><button>Materiales</button><button>Superficies</button><button>Sólidos</button><button>Huecos</button><button>Apoyos en nudos</button><button>Apoyos en línea</button><button>Apoyos en superficie</button><button>Articulaciones lineales</button><button class="cur">Secciones</button><button>Articulaciones en barras</button><button>Excentricidades de barras</button><button>Divisiones de barras</button><button>Barras</button><button>Apoyos elásticos en barra</button><button>No linealidades de barras</button><button>Conjuntos de barras</button><span class="rec"><button disabled><svg><path d="M4 4v8M11 4v8L6 8z"/></svg></button><button disabled><svg><path d="M10 4v8L5 8z"/></svg></button><button><svg><path d="M6 4v8l5-4z"/></svg></button><button><svg><path d="M12 4v8M5 4v8l5-4z"/></svg></button></span></div>
    </div>
   </section>
  </div>
  <footer class="status"><span>FORZC</span><span class="j">REJILLA</span><span class="o">ORTO</span><span class="j">REFENT</span><span class="g">GLN</span><span class="g">DXF</span><i></i><i></i><i></i><i></i></footer>
</main>

<section class="dlg d1">
 <h1>Editar sección<button class="x"><svg><path d="M3 3l10 10M13 3L3 13"/></svg></button></h1>
 <div class="cols">
  <div class="left">
   <div class="row3">
    <div class="grp"><h3><label for="num"><u>N</u>úm.</label></h3><input id="num" class="in r ro" value="1" readonly></div>
    <div class="grp"><h3>Color</h3><div class="clr"><i></i><button class="b foc"><svg><path d="M2 8q3-6 12-4 2 3-1 5-2 1-3 3-3 2-6 0z" fill="#b08a5a" stroke="#554"/><circle cx="5" cy="8" r="1.500" class="fr"/><circle cx="8" cy="5" r="1.500" fill="#2a2"/><circle cx="12" cy="5" r="1.500" fill="#22e"/><circle cx="6" cy="11" r="1.500" class="fy"/></svg></button></div></div>
    <div class="grp"><h3><label for="des"><u>D</u>escripción de la sección [mm]</label></h3><input id="des" class="in" value="GG L125x90x10"></div>
   </div>
   <div class="tabs"><button class="cur">Propiedades de la sección</button><button>Giro</button><button>Modificar</button></div>
   <div class="tabp"><div class="grp"><h3>Propiedades de la sección</h3>
    <div class="frm">
     <h4>Momentos de inercia</h4>
     <label for="a1"><u>T</u>orsión</label><span>I<sub>T</sub> :</span><div class="spin"><input id="a1" value="6.62" disabled><i class="ud"></i><i class="ar"></i></div><span>[cm<sup>4</sup>]</span>
     <label for="a2" class="g1">Flexión</label><span class="g1">I<sub>u</sub> :</span><div class="spin g1"><input id="a2" value="379.72" disabled><i class="ud"></i><i class="ar"></i></div><span class="g1">[cm<sup>4</sup>]</span>
     <label for="a3"></label><span>I<sub>v</sub> :</span><div class="spin"><input id="a3" value="76.14" disabled><i class="ud"></i><i class="ar"></i></div><span>[cm<sup>4</sup>]</span>
     <h4 class="g2">Áreas de la sección</h4>
     <label for="a4"><u>A</u>xial</label><span>A :</span><div class="spin"><input id="a4" value="20.50" disabled><i class="ud"></i><i class="ar"></i></div><span>[cm<sup>2</sup>]</span>
     <label for="a5" class="g1"><u>C</u>ortante</label><span class="g1">A<sub>u</sub> :</span><div class="spin g1"><input id="a5" value="7.31" disabled><i class="ud"></i><i class="ar"></i></div><span class="g1">[cm<sup>2</sup>]</span>
     <label for="a6"></label><span>A<sub>v</sub> :</span><div class="spin"><input id="a6" value="9.31" disabled><i class="ud"></i><i class="ar"></i></div><span>[cm<sup>2</sup>]</span>
     <h4 class="g2">Inclinación de ejes principales</h4>
     <label for="a7"><u>Á</u>ngulo</label><span>α :</span><div class="spin"><input id="a7" value="-26.81" disabled><i class="ud"></i><i class="ar"></i></div><span>[°]</span>
     <h4 class="g2">Dimensiones totales (para cargas no uniformes de temperatura)</h4>
     <label for="a8">Ancho</label><span>b :</span><div class="spin en"><input id="a8" value="90.0"><i class="ud"></i><i class="ar"></i></div><span>[mm]</span>
     <label for="a9">Canto</label><span>h :</span><div class="spin en"><input id="a9" value="125.0"><i class="ud"></i><i class="ar"></i></div><span>[mm]</span>
    </div></div></div>
   <div class="grp com"><h3><label for="com"><u>C</u>omentario</label></h3><div class="fl"><select id="com" class="sel2"><option></option></select><button class="b"><svg><path d="M1 3h9v6H1zM3 5h9v6H3zM6 8h9v6H6z" fill="#e8dca8" stroke="#7a6a30"/></svg></button></div></div>
  </div>
  <div class="right">
   <div class="grp pv">
    <div class="pg"><button class="b"><svg><use href="#bk"/></svg></button><button class="b pf s8"><svg><use href="#p1"/></svg>IPE</button><button class="b pf"><svg><use href="#p2"/></svg>HE-A</button><button class="b pf"><svg><use href="#p2"/></svg>HE-B</button><button class="b pf"><svg><use href="#p2"/></svg>HE-M</button><button class="b pf"><svg><use href="#p3"/></svg>QRO</button><button class="b pf"><svg><use href="#p4"/></svg>RRO</button><button class="b pf s8"><svg><use href="#pa1"/></svg>REC</button><button class="b pf s8"><svg><use href="#pa3"/></svg>REC</button><button class="b s8"><svg><use href="#s1"/></svg></button>
    <button class="b"><svg><use href="#hn"/></svg></button><button class="b pf s8"><svg><use href="#p5"/></svg>RO</button><button class="b pf"><svg><use href="#p6"/></svg>RD</button><button class="b pf"><svg><use href="#p7"/></svg>L</button><button class="b pf"><svg><use href="#p8"/></svg>U</button><button class="b pf"><svg><use href="#p2"/></svg>IS</button><button class="b pf"><svg><use href="#p9"/></svg>TS</button><button class="b pf s8"><svg><use href="#pa2"/></svg>CIR</button><button class="b pf s8"><svg><use href="#pa4"/></svg>TH</button><button class="b s8"><svg><use href="#s2"/></svg></button></div>
    <svg class="cv">
     <path d="M119.500 29.500h8q7 2 7 9v149q1 9 10 10.500h99q8 2 8 8v6.500h-132z" fill="url(#hatch)" stroke="#000"/>
     <g stroke="#000"><path d="M116 28.500H70M116 211.500H70M72.500 25v190M116 153.500H92M94.500 150v65M116 92.500h46M119.500 215v48M251.500 215v48M116 258.500h139M116 236.500h40M152.500 213v27"/></g>
     <g fill="#000"><circle cx="72.500" cy="28.500" r="2"/><circle cx="72.500" cy="211.500" r="2"/><circle cx="94.500" cy="153.500" r="2"/><circle cx="94.500" cy="211.500" r="2"/><circle cx="119.500" cy="92.500" r="2"/><circle cx="134.500" cy="92.500" r="2"/><circle cx="119.500" cy="236.500" r="2"/><circle cx="152.500" cy="236.500" r="2"/><circle cx="119.500" cy="258.500" r="2"/><circle cx="251.500" cy="258.500" r="2"/>
      <text x="5" y="12">GG L125x90x10</text><text x="136" y="89">10.0</text><text x="124" y="233">22.2</text><text x="174" y="255">90.0</text><text x="289" y="322">[mm]</text><text transform="translate(68 131) rotate(-90)">125.0</text><text transform="translate(90 190) rotate(-90)">39.5</text></g>
     <g stroke="#f0f" stroke-dasharray="7 3 2 3"><path d="M152.500 154.500H282M152.500 154.500v130M152.500 154.500L268 97M152.500 154.500L210 268"/></g>
     <path d="M219 154.500q0-16-7-29" stroke="#f0f"/>
     <g fill="#f0f"><path d="M281 151.500l6 3-6 3zM149.500 283h6l-3 6zM266 95l6 .2-3 5zM208 269l5 4.500.5-7zM151 153h3v3h-3zM218 153h3v3h-3zM211 124h3v3h-3z"/><g class="mag"><text x="289" y="165">y</text><text x="275" y="105">u</text><text x="155" y="299">z</text><text x="215" y="286">v</text><text x="224" y="139">α</text></g></g>
    </svg>
    <div class="pi"><button class="b"><svg><use href="#in"/></svg></button><button class="b tg pu"><svg><path d="M1 11h14M4 8l-3 3 3 3M12 8l3 3-3 3M6 2l4 4M10 2L6 6" class="N"/></svg></button><button class="b tg"><svg><path d="M4 14V4h10M2 11l2 3 2-3M11 2l3 2-3 2" class="N"/></svg></button><button class="b"><svg><path d="M2 2h12M8 2v12M2 14h12" class="N"/><path d="M1 1h3v2H1zM12 1h3v2h-3zM7 7h2v2H7zM1 13h3v2H1zM12 13h3v2h-3zM7 1h2v2H7zM7 13h2v2H7z" class="fr"/></svg></button><button class="b"><svg><path d="M0 2h5M1.500 14H0h5M16 2h-5M16 14h-5M5 2v12M11 2v12" class="N"/></svg></button><button class="b dis"><svg><path d="M0 3h16v10H0z" class="fw A"/><text x="2" y="11" class="tg8">123</text></svg></button><button class="b s8"><svg><use href="#zd"/></svg></button></div>
   </div>
   <div class="grp mat"><h3>Material</h3><div class="msel"><i class="sw v"></i><span>2</span><span class="m1">Acero S 235</span><span class="m2">EN 1993-1-1:2005-05</span><svg><path d="M4 6l4 4 4-4"/></svg></div><div class="mb"><button class="b"><svg><use href="#bk"/></svg></button><button class="b"><svg><path d="M5 5h10v9H5z" class="fw K"/><path d="M5 6h10" class="K w2"/><use href="#star"/></svg></button><button class="b"><svg><use href="#hn"/></svg></button></div></div>
  </div>
 </div>
 <div class="foot"><button class="b"><svg><use href="#hp"/></svg></button><button class="b"><svg><path d="M0 1h16v4H0z" fill="#5b5"/><text x="0" y="14" class="tk">0.00</text></svg></button><span></span><button class="ok">Aceptar</button><button class="ok">Cancelar</button></div>
</section>

<section class="dlg d2">
 <h1>Biblioteca de secciones<button class="x"><svg><path d="M3 3l10 10M13 3L3 13"/></svg></button></h1>
 <div class="lib">
  <div class="grp ga"><h3>Laminadas</h3><div class="sg">
   <button class="foc2"><svg><path d="M4 1h8M8 1v14M4 15h8"/></svg></button><button><svg><path d="M11 1H6v14h5"/></svg></button><button><svg><path d="M2 3h12L9 5v8H8V5z" fill="#000080"/></svg></button><button><svg><path d="M4 2v11h11"/></svg></button>
   <button><svg><rect x="4" y="1" width="9" height="14" rx="2"/></svg></button><button><svg><circle cx="8" cy="8" r="6"/></svg></button><button><svg><ellipse cx="8" cy="8" rx="3.500" ry="6"/></svg></button><button><svg><path d="M10 3L5 12h10"/></svg></button>
   <button><svg><path d="M3 1h6v14h6"/></svg></button><button><svg><path d="M4 3h8q2 4-2 6v2l4 2H2l4-2V9Q2 7 4 3z" class="fn"/></svg></button><button><svg><path d="M1 7l3 4 3-5 3 5 3-5 3 2"/></svg></button><button><svg><circle cx="8" cy="4" r="3" class="fn"/><path d="M4 12h8" class="w2"/></svg></button></div></div>
  <div class="grp gb"><h3>Armadas</h3><div class="sg">
   <button><svg><path d="M1 1h6M4 1v14M1 15h6M9 1h6M12 1v14M9 15h6"/></svg></button><button><svg><path d="M1 1h6v14H1M15 1H9v14h6"/></svg></button><button><svg><path d="M1 6V1h14v5M4 4h8M8 4v11M4 15h8"/></svg></button><button><svg><path d="M1 5h6v6M15 5H9v6" class="w2"/></svg></button>
   <button><svg><path d="M1 3h6v11M15 3H9v11" class="w2"/></svg></button><button><svg><path d="M2 2h7M5.500 2v12M2 14h7M12.500 2v13"/></svg></button><button><svg><path d="M4 1h8M8 1v14M4 15h8M4 11h8"/></svg></button><button><svg><path d="M2 1h12M8 4v10M3 14h10M6 4h4"/></svg></button>
   <button><svg><path d="M4 1h8M4 15h8M8 1v5M8 7v2M8 10v5"/></svg></button><button><svg><path d="M3 3h10M8 3v12M4 15h8"/><path d="M6 1h4v2H6z" class="fn"/></svg></button><button><svg><path d="M5 2h6M8 2v12M5 14h6"/><path d="M3 0h10M3 16h10" stroke="#fff"/></svg></button><button><svg><path d="M8 0h8v16H8z" fill="#b8bcdc" stroke="none"/><path d="M0 1h5M3 1v14M0 15h5M8 1h8M8 15h8"/><circle cx="12" cy="8" r="2" class="fw"/></svg></button>
   <button><svg><circle cx="3.500" cy="8" r="3" class="fn"/><circle cx="12.500" cy="8" r="3" class="fn"/></svg></button><button><svg><path d="M1 2h13M9 2v13H6"/></svg></button></div></div>
  <div class="grp gc"><h3>Paramétrica - Pared delgada</h3><div class="sg">
   <button><svg><path d="M2 1h12M8 1v14M2 15h12"/></svg></button><button><svg><path d="M2 1h12M8 1v14M4 15h8"/></svg></button><button><svg><path d="M4 1h10M8 1v14M4 15h10"/></svg></button><button><svg><path d="M3 1h11M8 1v15"/></svg></button>
   <button><svg><path d="M3 1h10M6 1v15"/></svg></button><button><svg><path d="M3 2v12h12"/></svg></button><button><svg><path d="M5 1v14h7"/></svg></button><button><svg><path d="M4 1h8v14H4z"/></svg></button>
   <button><svg><path d="M14 1H4v14h10"/></svg></button><button><svg><path d="M3 2h10M8 2v13M4 15h8M5 1h6M5 14h6"/></svg></button><button><svg><path d="M3 4V1h10v3M8 1v14M5 15h6"/></svg></button><button><svg><path d="M3 1h10M8 1v14M5 15h6M4 1l4 5 4-5"/></svg></button>
   <button><svg><circle cx="8" cy="8" r="6"/></svg></button><button><svg><path d="M2 2h12M4 2l2 12h4l2-12"/></svg></button><button><svg><path d="M1 1h14M1 15h14M5 1v14M11 1v14"/></svg></button><button><svg><path d="M1 1h14M4 1v14h8V1"/></svg></button>
   <button><svg><path d="M1 1h14M1 15h14M4 1v14M12 1v14M4 6l4-5 4 5"/></svg></button><button><svg><path d="M1 1h14M4 1v14h8V1M4 6l4-5 4 5"/></svg></button><button><svg><path d="M1 2h14M5 2v13M11 2v13"/></svg></button><button><svg><path d="M1 2h14M5 2v13H3M11 2v13h3"/></svg></button>
   <button><svg><path d="M2 1h12M8 1v14M2 11h12M5 15h6"/></svg></button><button><svg><path d="M5 1h6M8 1v14M2 5h12M2 15h12"/></svg></button><button><svg><path d="M8 3v11M2 8h12"/></svg></button><button><svg><circle cx="8" cy="8" r="3.500" class="fn"/></svg></button>
   <button><svg><path d="M3 8h11" stroke-width="3" stroke="#3c3ca0"/></svg></button><button><svg><path d="M3 3h10M8 3v12M3 15h10"/><path d="M5 1h6v2H5z" class="fn"/></svg></button><button><svg><path d="M3 1h5v14h6"/></svg></button><button><svg><path d="M14 1H9v14H3"/></svg></button>
   <button><svg><path d="M2 1h12M8 1v14M4 15h8"/></svg></button><button><svg><path d="M12 5V1H4v14h10v-4"/></svg></button><button><svg><path d="M13 1v3H4v7h10v4"/></svg></button><button><svg><path d="M11 1v3H4v11h10v-4"/></svg></button>
   <button><svg><path d="M12 4V1H5v3l4 4-4 4v3h7v-3"/></svg></button><button><svg><ellipse cx="8" cy="8" rx="3.500" ry="6"/></svg></button><button><svg><path d="M2 2h13l-3 12H5z"/></svg></button><button><svg><circle cx="8" cy="8" r="6.500"/></svg></button></div></div>
  <div class="grp gd mz"><h3>Paramétrica - Maciza</h3><div class="sg">
   <button><svg><path d="M4 1h8v14H4z"/></svg></button><button><svg><path d="M2 1h12v4h-4v10H6V5H2z"/></svg></button><button><svg><path d="M6 1h4v10h4v4H2v-4h4z"/></svg></button><button><svg><path d="M2 1h12v4h-4v6h4v4H2v-4h4V5H2z"/></svg></button>
   <button><svg><path d="M2 1h12v4h-4v6h2v4H4v-4h2V5H2z"/></svg></button><button><svg><circle cx="8" cy="8" r="7"/></svg></button><button><svg><circle cx="8" cy="8" r="7"/><circle cx="8" cy="8" r="3.500" class="fw"/></svg></button><button><svg><path d="M3 1h10v14H3z"/><path d="M6 4h4v8H6z" class="fw"/></svg></button>
   <button><svg><path d="M3 1h10l-3 14H6z"/></svg></button><button><svg><path d="M1 4h4v5h6V4h4v9H1z"/></svg></button><button><svg><path d="M3 1h10v3l-3 2v4l4 3v2H2v-2l4-3V6L3 4z"/></svg></button><button><svg><path d="M4 1h8v3l-2 2v9H6V6L4 4z"/></svg></button>
   <button><svg><path d="M1 2h14v4H9v9H5V6H1z"/></svg></button><button><svg><path d="M5 1h4v10h6v4H1v-4h4z"/></svg></button><button><svg><path d="M1 2h9v9h5v3H7V5H1z"/></svg></button><button><svg><path d="M15 2H7v9H1v3h9V5h5z"/></svg></button>
   <button><svg><path d="M1 2h14v5h-2v7h-3V7H6v7H3V7H1z"/></svg></button><button><svg><path d="M1 2h14v4l-2 8h-3L9 7H7l-1 7H3L1 6z"/></svg></button><button><svg><path d="M1 2h14v4l-3 8h-2L8 7l-2 7H4L1 6z"/></svg></button><button><svg><rect x="1" y="4" width="15" height="8" rx="4"/></svg></button>
   <button><svg><path d="M1 2h14v4h-3l-2 7H6L4 6H1z"/></svg></button><button><svg><path d="M1 2h14v4l-5 2v5H6V8L1 6z"/></svg></button><button><svg><path d="M3 1h10v14H3z"/><ellipse cx="8" cy="8" rx="3" ry="5" class="fw"/></svg></button><button><svg><path d="M2 1h12v4q-6 3 0 6v4H2v-4q6-3 0-6z"/></svg></button>
   <button><svg><path d="M4 1h3v14H4zM10 1h3v14h-3z"/></svg></button><button><svg><path d="M2 1h3v14H2zM7 1h3v14H7zM12 1h3v14h-3z"/></svg></button><button><svg><path d="M2 1h12v4q-6 3 0 6v4H2v-4q6-3 0-6z"/></svg></button></div></div>
  <div class="grp ge wd"><h3>Paramétrica - Madera</h3><div class="sg">
   <button><svg><path d="M4 1h8v14H4z"/></svg></button><button><svg><circle cx="8" cy="8" r="7"/></svg></button><button><svg><ellipse cx="8" cy="8" rx="7" ry="6"/><path d="M6 2v12M10 2v12"/></svg></button><button><svg><path d="M2 1h5v14H2zM9 1h5v14H9z"/></svg></button>
   <button><svg><path d="M2 1h3v14H2zM7 1h3v14H7zM12 1h3v14h-3z"/></svg></button><button><svg><path d="M1 1h2v14H1zM5 1h2v14H5zM9 1h2v14H9zM13 1h2v14h-2z"/></svg></button><button><svg><path d="M3 4h10v8H3zM6 1h4v14H6z"/></svg></button><button><svg><path d="M2 4h12v8H2zM4 1h3v14H4zM9 1h3v14H9z"/></svg></button>
   <button><svg><path d="M2 1h12v4H2zM6 5h4v10H6z"/></svg></button><button><svg><path d="M2 1h12v4H2zM6 1h4v14H6z"/></svg></button><button><svg><path d="M1 1h14v4H1zM1 5h4v10H1zM11 5h4v10h-4z"/></svg></button><button><svg><path d="M5 1h6v4H5zM1 1h4v14H1zM11 1h4v14h-4z"/></svg></button>
   <button><svg><path d="M2 1h12v4H2zM6 5h4v6H6zM4 11h8v4H4z"/></svg></button><button><svg><path d="M2 1h12v4H2zM4 11h8v4H4zM6 1h4v14H6z"/></svg></button><button><svg><path d="M1 1h14v4H1zM4 5h3v6H4zM9 5h3v6H9zM1 11h14v4H1z"/></svg></button><button><svg><path d="M1 1h14v4H1zM3 11h10v4H3zM4 1h3v14H4zM9 1h3v14H9z"/></svg></button>
   <button><svg><path d="M1 1h14v4H1zM1 5h4v6H1zM11 5h4v6h-4zM1 11h14v4H1z"/></svg></button><button><svg><path d="M1 1h4v14H1zM11 1h4v14h-4zM5 1h6v4H5zM5 11h6v4H5z"/></svg></button><button><svg><path d="M1 1h14v3H1zM1 12h14v3H1zM1 1h3v14H1zM7 1h2v14H7zM12 1h3v14h-3z"/></svg></button><button><svg><path d="M1 1h14v3H1zM1 12h14v3H1zM1 1h3v14H1zM7 1h2v14H7zM12 1h3v14h-3z"/></svg></button>
   <button><svg><path d="M1 1h6v6H1zM9 1h6v6H9zM1 9h6v6H1zM9 9h6v6H9z"/></svg></button><button><svg><path d="M3 1h4v3H3zM9 1h4v3H9zM3 6h4v3H3zM9 6h4v3H9zM3 11h4v3H3zM9 11h4v3H9z"/></svg></button><button><svg><path d="M4 3h8v3h-2v4h2v3H4v-3h2V6H4zM1 1h14M1 3h14M1 13h14M1 15h14"/></svg></button><button><svg><path d="M3 1h10l-3 14H6z"/></svg></button>
   <button><svg><path d="M5 2h7v12H5zM5 6h7M5 10h7"/></svg></button><button><svg><path d="M5 0h7v15H5zM5 3h7M5 6h7M5 9h7M5 12h7"/></svg></button></div></div>
  <div class="grp gf wd"><h3>Normalizada - Madera</h3><div class="sg"><button><svg><path d="M4 1h8v14H4z"/></svg></button><button><svg><path d="M0 2h7v3H5v6h2v3H0v-3h2V5H0zM9 2h6v12H9z"/><path d="M11 5h2v6h-2z" class="fw"/></svg></button><button><svg><path d="M1 1h5v14H1zM6 1h5v14H6zM11 1h5v14h-5z"/></svg></button></div></div>
  <div class="grp gg"></div>
  <div class="grp gh ic"><h3>Definido por el usuario</h3><div class="sg"><button><svg><path d="M5 2q8 0 10 8l-3 3" fill="#8fb0e0" stroke="#3a5a98"/><path d="M1 5h4l1 1h6v7H1z" fill="#efe08a" stroke="#a8901f"/></svg></button><button><svg><path d="M1 1h11v14H1z" class="fw K"/><path d="M3 4h6M3 7h6M3 10h5M3 12.500h6" class="K"/><path d="M15 2l-6 9" stroke="#e5b800" stroke-width="3"/></svg></button></div></div>
  <div class="grp gi ic"><h3>Programa de secciones</h3><div class="sg"><button><svg><rect width="16" height="16" stroke="#fb6"/><use href="#s1"/></svg></button><button><svg><rect width="16" height="16" stroke="#fb6"/><use href="#s2"/></svg></button></div></div>
 </div>
 <div class="foot"><button class="b"><svg><use href="#hp"/></svg></button><button class="b"><svg><path d="M0 1h4l1 1h6v6H0z" fill="#e8cf58" stroke="#a8901f"/><path d="M5 8h3v7H4zM10 8h3l2 7h-5zM7 9h4" fill="#444" class="K"/></svg></button><span></span><button class="ok">Cancelar</button></div>
</section>

<section class="dlg d3">
 <h1>Propiedades de las secciones definidas por el usuario<button class="x"><svg><path d="M3 3l10 10M13 3L3 13"/></svg></button></h1>
 <div class="usr">
  <div class="grp u1"><h3>Tabla</h3><ul class="lst"><li>SHAPE-THIN<li>SHAPE-MASSIVE<li class="s">GG</ul><div class="lb"></div></div>
  <div class="grp u2"><h3>Descripción de la sección</h3><ul class="lst"><li>GG L90x75x9<li>GG L100x75x7<li>GG L100x75x10<li>GG L125x75x7<li>GG L125x75x10<li>GG L125x75x13<li class="s f">GG L125x90x10<li>GG L125x90x13<li>GG L150x90x9<li>GG L150x90x12<li>GG L150x100x9<li>GG L150x100x12<li>GG L150x100x15</ul><div class="lb"><button class="b"><svg><use href="#in"/></svg></button><button class="b dis"><svg class="off"><use href="#hn"/></svg></button><span></span><button class="b"><svg><path d="M3 2q5 5 9 13M13 1Q7 6 4 14" stroke="#d3222a" stroke-width="3"/></svg></button></div></div>
  <div class="u3">
   <div class="grp"><h3>Propiedades de la sección</h3><div class="pr">
    <label for="b1">I<sub>T</sub> :</label><input id="b1" value="6.62" disabled><span>[cm<sup>4</sup>]</span>
    <label for="b2">I<sub>y</sub> :</label><input id="b2" value="379.72" disabled><span>[cm<sup>4</sup>]</span>
    <label for="b3">I<sub>z</sub> :</label><input id="b3" value="76.14" disabled><span>[cm<sup>4</sup>]</span>
    <label for="b4" class="g1"><u>A</u> :</label><input id="b4" class="g1" value="20.50" disabled><span class="g1">[cm<sup>2</sup>]</span>
    <label for="b5">A<sub>y</sub> :</label><input id="b5" value="7.31" disabled><span>[cm<sup>2</sup>]</span>
    <label for="b6">A<sub>z</sub> :</label><input id="b6" value="9.31" disabled><span>[cm<sup>2</sup>]</span>
    <label for="b7" class="g1">α :</label><input id="b7" class="g1" value="-26.81" disabled><span class="g1">[°]</span>
    <label for="b8" class="g1">U :</label><input id="b8" class="g1" value="0.400" disabled><span class="g1">[m<sup>2</sup>/m]</span>
    <span class="g1">Tipo:</span><label class="rd g1"><input type="radio" name="t" checked disabled>Abierta</label><label class="rd r2"><input type="radio" name="t" disabled>Cerrada</label>
   </div></div>
   <div class="grp"><h3>Curva de pandeo</h3><div class="cp">
    <b>Según EN</b><b>Según DIN</b>
    <label for="c1">CP<sub>y</sub> :</label><input id="c1" value="b" disabled><label for="c2">CP<sub>y</sub> :</label><input id="c2" value="c" disabled>
    <label for="c3">CP<sub>z</sub> :</label><input id="c3" value="b" disabled><label for="c4">CP<sub>z</sub> :</label><input id="c4" value="c" disabled>
    <b class="w">Según EN (f<sub>y</sub> ≥ 460 N/mm<sup>2</sup>)</b>
    <label for="c5">CP<sub>y</sub> :</label><input id="c5" class="l" value="b" disabled>
    <label for="c6">CP<sub>z</sub> :</label><input id="c6" class="l" value="b" disabled>
   </div></div>
  </div>
 </div>
 <div class="foot"><button class="b"><svg><use href="#hp"/></svg></button><button class="b"><svg><use href="#un"/></svg></button><span></span><button class="ok foc">Aceptar</button><button class="ok">Cancelar</button></div>
</section>

<svg class="arrows" aria-hidden="true"><path d="M2479 1093L1450 210M2375 471L2186 626" stroke="#00f" stroke-width="2"/><path d="M1443 204l14 6-7 8zM2179 632l5-12 7 9z" fill="#00f"/></svg>
</div>
</body>
</html>
```
FILE: styles.css
```css
*{box-sizing:border-box}
body{margin:0;background:#fff;font:11px/14px "Liberation Sans",Arial,sans-serif;color:#000}
svg{display:block;width:16px;height:16px;fill:none;flex:none;overflow:visible}
.defs{position:absolute;width:0;height:0}
h1,h2,h3,h4,ul,li{margin:0;padding:0;font-weight:400;list-style:none}
h3,h4{font-size:11px}
button{margin:0;padding:0;border:0;background:none;font:inherit;color:inherit;display:flex;align-items:center;justify-content:center;white-space:nowrap}
input,select{font:inherit;color:inherit;margin:0;min-width:0}
sub,sup{font-size:9px;line-height:0}
i{font-style:normal}
.K{stroke:#333}.N{stroke:#2f4c9c}.R{stroke:#dc2020}.G{stroke:#2a8a3a}.A{stroke:#8b909c}.w2{stroke-width:2}
.fr{fill:#e01818}.fb{fill:#5b8be0}.fy{fill:#f3e44c}.fw{fill:#fff}
.tk{font-size:8px;font-weight:700;fill:#222}
.tg8{font-size:8px;fill:#666}
.fx{font:italic 13px "Liberation Serif",serif;fill:#555}
.page{position:relative;min-height:100vh;display:grid;grid-template-columns:40fr 17fr;overflow:hidden}
.app{display:flex;flex-direction:column;min-width:0;background:#d0d4dd}
.title{height:23px;background:#fff;display:flex;align-items:center;padding-left:2px;gap:5px;font:12px "Open Sans","Noto Sans",sans-serif;color:#999}
.wb{margin-left:auto;display:flex;gap:30px;padding-right:16px}
.wb svg{stroke:#888}
.menu{height:24px;display:flex;align-items:center;gap:15px;padding-left:2px;font:11px "Open Sans","Noto Sans",sans-serif}
.menu .grip{margin-right:-12px}
.menu>svg{margin-right:-7px}
.menu a{color:#333;text-decoration:none}
.mdi{margin-left:auto;display:flex;padding-right:2px;stroke:#555}
.grip{flex:none;width:3px;height:14px;margin:0 3px;background:repeating-linear-gradient(#99a 0 2px,transparent 2px 4px)}
.bars{display:flex;height:26px}
.bar{display:flex;align-items:center;height:25px;border-radius:3px;background:linear-gradient(#eef1f8,#dde3ee 60%,#cdd4e2);border-bottom:1px solid #b4bac8;padding:0 2px 0 1px}
.bar button,.pbar button{width:22px;height:22px;flex:none}
.bar .on,.pbar .on{background:linear-gradient(#fde9c2,#fcc667);border:1px solid #d99a3c}
.bar .dd{width:13px}
.dd::after{content:"";border:3px solid transparent;border-top-color:#888;border-bottom:0}
.sep{flex:none;width:1px;height:16px;background:#a9afbc;margin:0 3px 0 4px}
.lc{width:218px;height:19px;border:1px solid #fff;background:#fff;padding:0 2px;font:11px "Open Sans",sans-serif;margin-right:1px;appearance:none;background-image:linear-gradient(#999,#999),linear-gradient(#777,#777),linear-gradient(#e4e7ee,#e4e7ee);background-size:3px 1px,5px 1px,15px 100%;background-repeat:no-repeat;background-position:right 6px top 9px,right 5px top 8px,right}
.off{opacity:.5}
.work{flex:1;display:flex;min-height:0;border-top:1px solid #888}
.nav{flex:none;width:301px;display:flex;flex-direction:column;font-family:"Open Sans","Noto Sans",sans-serif;padding-right:6px}
.nav h2{height:21px;background:#e4e9f4;border:1px solid #b9bfcc;padding-left:3px;font-size:11px;line-height:18px;color:#444;display:flex;justify-content:space-between}
.nav h2 svg,.panel h2 svg{stroke:#666}
.nav h2 span,.panel h2 span{display:flex;padding-right:2px}
.tree{flex:1;min-height:0;margin:1px 3px 0;border:1px solid #8a8e98;background:#fbfbf4;display:grid;grid-template:1fr 17px / 1fr 16px}
.tree ul{overflow:hidden;min-width:0;--d:repeating-linear-gradient(#777 0 1px,transparent 1px 2px);--h:repeating-linear-gradient(90deg,#777 0 1px,transparent 1px 2px)}
.tree li{height:18px;display:flex;align-items:center;white-space:nowrap;padding-left:45px;background:var(--d) 30px 0/1px 100%,var(--d) 49px 0/1px 100%,var(--h) 49px 9px/12px 1px;background-repeat:no-repeat;line-height:18px}
.tree .l0{padding-left:7px;background:var(--h) 12px 9px/12px 1px no-repeat}
.tree .l1{padding-left:26px;background:var(--d) 30px 0/1px 100%,var(--h) 30px 9px/12px 1px;background-repeat:no-repeat}
.tree .l3{padding-left:64px;background:var(--d) 30px 0/1px 100%,var(--d) 49px 0/1px 100%,var(--h) 68px 9px/10px 1px;background-repeat:no-repeat}
.tree svg{margin-right:4px}
.e{flex:none;width:9px;height:9px;margin-right:7px}
.e.m,.e.p{border:1px solid #8a8e98;background:linear-gradient(#24408c,#24408c) 1px 3px/5px 1px no-repeat,#fff}
.e.p{background:linear-gradient(#24408c,#24408c) 1px 3px/5px 1px no-repeat,linear-gradient(#24408c,#24408c) 3px 1px/1px 5px no-repeat,#fff}
.vs{background:#f0f0f0;display:flex;flex-direction:column;stroke:#444}
.vs svg,.hs svg{stroke-width:2}
.vs svg{margin:2px 0}
.vs i{flex:0 0 42%;background:#cdcdcd;margin-top:5px}
.vs svg:last-child{margin-top:auto}
.hs{background:#f0f0f0;display:flex;align-items:center;stroke:#444;grid-column:1}
.hs i{width:100px;height:15px;background:#cdcdcd}
.hs svg:last-child{margin-left:auto;margin-right:0}
.ntabs{height:26px;display:flex;gap:8px;padding:2px 0 0 4px;color:#444;align-items:flex-start;font-size:11px}
.ntabs button{height:20px;gap:3px;padding:0 3px}
.ntabs .cur{background:#f2f5fa;border:1px solid #bcd;border-top:0;border-radius:0 0 3px 3px}
.main{flex:1;min-width:0;display:flex;flex-direction:column}
.view{flex:1;min-height:0;background:#fcfcfc;border-left:1px solid #666;border-top:1px solid #666;position:relative;overflow:hidden}
.view svg{position:absolute;width:100%;height:100%;overflow:hidden}
.axl{font:bold 10px "Liberation Sans",sans-serif}
.panel{margin-top:7px;background:#f0f0f0;border-left:1px solid #aab;height:367px;display:flex;flex-direction:column}
.panel h2{height:19px;background:#b8c0ca;padding-left:3px;font:11px/19px "Open Sans",sans-serif;color:#444;display:flex;justify-content:space-between}
.pbar{display:flex;align-items:center;height:25px;padding-left:6px;background:linear-gradient(#eef2f9,#d5dbe7);border-bottom:1px solid #666;margin-bottom:2px}
.pbar .pf,.pf{flex-direction:column;font-size:7px;line-height:7px;gap:1px}
.pf svg{width:14px;height:10px;stroke:#40549c}
.sheet{display:flex;padding:0 2px 0 1px}
.sheet .vs{width:16px;margin-left:1px}
.sheet .vs i{flex:1;margin:0}
table{flex:1;border-collapse:collapse;table-layout:fixed;width:100%;background:#fff}
td,th{border:1px solid #a0a0a0;padding:0 3px;height:16px;font-weight:400;line-height:14px;white-space:nowrap;overflow:hidden}
td{text-align:right}
th{background:#f0f0f0;text-align:center;padding:0}
thead th{height:17px}
thead tr:nth-child(3) th{height:16px}
.let th{background:#e2e2e2;border:1px solid #808080;height:15px;line-height:13px}
th.nb{border-bottom-color:#f0f0f0}
thead tr:nth-child(3) th{border-top-color:#f0f0f0}
.let .cn{background:#e8e8e8}
tbody th{background:#e2e2e2;border-color:#707070}
.let .sel,.r1 th{background:#0078d7;color:#fff}
.r1 td{background:#e8e8e8}
.r1 td.y{background:#ffffc8}
tbody td:nth-child(10),tbody td:last-child{background:#f0f0f0}
.r1 td:nth-child(10){background:#e8e8e8}
td.first{padding:0 1px}
td.first div{display:flex;align-items:center;height:15px;text-align:left}
td.first svg{width:12px;height:15px;margin:0 1px}
td.first span{flex:1;outline:1px dotted #000;outline-offset:-1px;padding-left:3px}
td.first em{flex:1;font-style:normal;padding-left:16px}
.sw{flex:none;width:13px;height:13px;background:#6699ff;border:1px solid #333}
.sw.v{background:#6464ff}
.c0{width:45px}.cA{width:221px}.cB{width:54px}.cC{width:66px}.cI{width:72px}
.stabs{display:flex;margin-top:12px;border-top:1px solid #555;height:17px}
.stabs button{height:16px;padding:0 3px;border:1px solid #666;border-top:0;border-radius:0 0 4px 4px;background:#e8e8e8;margin-right:-1px}
.stabs .cur{background:#fff}
.rec{margin-left:auto;display:flex}
.stabs .rec button{width:16px;padding:0;border:1px solid #888;border-radius:0;margin:0}
.rec svg{width:14px;stroke:#000;fill:#000}
.rec :disabled svg{stroke:#aaa;fill:#aaa}
.status{height:19px;background:linear-gradient(#dfe2e8,#b9bfca 40%,#a3a9b5);display:flex;padding:1px 0 0 1170px;gap:2px;font:11px/18px "Liberation Sans",sans-serif;color:#222;overflow:hidden}
.status span{flex:none;width:42px;border:1px solid #222;border-right-color:#fff;border-bottom:0;text-align:center}
.status .j{width:46px}
.status .o{width:50px}
.status .g{width:28px}
.status i{margin-left:84px;border-left:1px solid #8a909c}
.status i:first-of-type{margin-left:190px}
.dlg{position:absolute;background:#f0f0f0;border:1px solid #666;box-shadow:4px 5px 12px rgba(0,0,0,.3);display:flex;flex-direction:column}
.dlg h1{height:26px;flex:none;background:#fff;font:11px/25px "Open Sans","Noto Sans",sans-serif;padding:0 7px 0 4px;display:flex;justify-content:space-between}
.x svg{stroke:#111}
.grp{position:relative;background:#f0f4f9;border-bottom:1px solid #a4a4f0;border-right:1px solid #a4a4f0;border-left:1px solid #e2e9f6}
.grp h3{height:16px;line-height:16px;padding-left:2px;margin:0 -1px;color:#1f3f66;background:linear-gradient(225deg,#f0f0f0 8px,#dbe6f5 9px);white-space:nowrap}
.b{flex:none;width:25px;height:21px;background:#e1e1e1;border:1px solid #adadad}
.b.foc,.ok.foc{border:2px solid #0078d7}
.dis{background:#ccc}
.ok{width:73px;height:21px;background:#e1e1e1;border:1px solid #adadad;font:11px "Open Sans",sans-serif}
.foot{display:flex;gap:9px;align-items:center;margin:0 8px;padding-top:12px;border-top:1px solid #a0a0a0}
.foot span{flex:1}
.d1{left:1145px;top:126px;width:728px;height:591px}
.cols{display:flex;padding:7px 8px 0;gap:8px;height:521px}
.left{width:382px;display:flex;flex-direction:column}
.row3{display:grid;grid-template-columns:52px 67px 1fr;gap:8px;height:46px;margin-bottom:9px}
.in{display:block;margin:3px 2px 0;width:calc(100% - 5px);height:20px;border:1px solid #7a7a7a;padding:0 5px;background:#fff}
.r{text-align:right}
.ro{background:#eee}
.clr{display:flex;justify-content:space-between;padding:4px 3px 0 5px}
.clr i{width:11px;height:20px;background:#6699ff;border:1px solid #000}
.tabs{display:flex;align-items:flex-end;height:20px}
.tabs button{height:18px;border:1px solid #d9d9d9;border-bottom:0;padding:0 6px;background:#f0f0f0}
.tabs button:nth-child(2){width:40px;justify-content:flex-start;padding:0 4px}
.tabs .cur{background:#fff;height:20px;width:138px;border:0}
.tabp{background:#fff;border:1px solid #dcdcdc;padding:6px;flex:1;margin-bottom:11px}
.tabp .grp{height:100%}
.frm{display:grid;grid-template-columns:78px 24px 93px 1fr;align-items:center;padding:6px 0 0 2px;row-gap:3px}
.frm h4{grid-column:1/-1;line-height:16px}
.frm .g1{margin-top:4px}
.frm .g2{margin-top:14px}
.frm label,.frm span{line-height:14px;white-space:nowrap}
.frm>span:nth-of-type(even){padding-left:7px}
.spin{display:flex;height:20px;border:1px solid #7f9db9;background:#f0f0f0;align-items:center;padding-right:1px}
.spin input{flex:1;width:0;border:0;background:none;text-align:right;padding:0 5px;color:#000}
.spin.en{background:#fff}
.ud,.ar{flex:none;width:12px;height:15px;border:1px solid #ddd;position:relative;background:#f0f0f0}
.ar{width:9px;margin-left:2px}
.ud::before,.ud::after,.ar::after{content:"";position:absolute;left:2px;top:2px;border:3px solid transparent;border-top:0;border-bottom-color:#888}
.ud::after{top:8px;border-top:3px solid #888;border-bottom:0}
.ar::after{left:2px;top:4px;border:3px solid transparent;border-left-color:#888;border-right:0}
.en .ud::before{border-bottom-color:#000}
.en .ud::after{border-top-color:#000}
.en .ar::after{border-left-color:#000}
.com{height:46px}
.fl{display:flex;gap:3px;padding:4px 3px 0 2px}
.sel2{flex:1;height:21px;border:1px solid #7a7a7a;background:#fff}
.right{flex:1;display:flex;flex-direction:column}
.pv{height:415px;border-top:1px solid #dbe6f5}
.pg{display:grid;grid-template-columns:25px repeat(9,auto);justify-content:start;row-gap:4px;column-gap:5px;padding:3px 0 5px 2px}
.s8{margin-left:4px}
.cv{width:100%;height:330px;border-top:1px solid #888;border-left:1px solid #888;background:linear-gradient(225deg,#fdf8e6,#fff9ef 30%,#fefefe);font-size:11px;overflow:hidden}
.mag{font:11px "Liberation Mono",monospace}
.pi{display:flex;gap:5px;padding:4px 3px}
.pu{margin-left:auto}
.tg{background:#cce4f7;border-color:#005499}
.mat{margin-top:10px;height:81px}
.msel{display:flex;align-items:center;height:21px;margin:4px 3px 0 2px;border:1px solid #7a7a7a;background:#fff;padding:0 3px;gap:7px}
.msel svg,.d1 .msel path{stroke:#444}
.m1,.m2{border-left:1px solid #333;padding-left:5px}
.m1{width:88px}.m2{flex:1}
.mb{display:flex;gap:5px;justify-content:flex-end;padding:4px 3px}
.d2{left:1977px;top:20px;width:742px;height:519px}
.lib{display:grid;grid-template-columns:repeat(4,174px);grid-template-rows:177px 102px 64px 61px;grid-template-areas:"a c d e" "b c d e" "b c d f" "g g h i";gap:10px 9px;padding:7px 8px 0 9px;margin-bottom:10px}
.ga{grid-area:a}.gb{grid-area:b}.gc{grid-area:c}.gd{grid-area:d}.ge{grid-area:e}.gf{grid-area:f}.gg{grid-area:g}.gh{grid-area:h}.gi{grid-area:i}
.sg{display:grid;grid-template-columns:repeat(4,37px);gap:7px 6px;padding:6px 0 0 3px}
.sg button{height:30px;background:#e1e1e1;border:1px solid #adadad}
.sg svg{stroke:#000080;stroke-width:1.4px}
.ic svg{stroke:none}
.fn{fill:#3c3ca0;stroke:none}
.mz svg{stroke:#777;fill:#a0a0a0;stroke-width:1px}
.wd svg{stroke:#777;fill:#ffa531;stroke-width:1px}
.mz .fw{fill:#e8e8e8}
.foc2{outline:1px dotted #000;outline-offset:-3px}
.d3{left:2041px;top:597px;width:602px;height:518px}
.usr{display:grid;grid-template-columns:127px 225px 1fr;gap:7px;padding:8px 8px 0;height:439px;margin-bottom:10px}
.u1,.u2{display:flex;flex-direction:column}
.lst{flex:1;background:#fff;border:1px solid #999;border-width:1px 0 0 1px;margin:1px 0 0}
.lst li{height:19px;line-height:19px;padding-left:4px;margin-right:3px;font-size:12px}
.lst .s{background:#0078d7;color:#fff}
.lst .f{outline:1px dotted #f80;outline-offset:-1px}
.lb{height:28px;display:flex;gap:5px;padding:4px 3px}
.lb span{flex:1}
.u3{display:grid;grid-template-rows:260px 1fr;gap:10px}
.pr{display:grid;grid-template-columns:36px 71px 1fr;column-gap:0;row-gap:1px;padding:7px 0 0 2px;font-size:12px;align-items:center}
.pr>input,.cp input{height:20px;border:1px solid #7a7a7a;background:#f0f0f0;text-align:right;color:#000;padding:0 3px}
.pr>span{padding-left:4px}
.pr>span:nth-last-of-type(1){padding:0}
.pr .g1{margin-top:7px}
.rd{color:#838383;grid-column:2/4;display:flex;align-items:center;gap:3px;height:18px}
.rd input{width:13px;height:13px}
.cp{display:grid;grid-template-columns:36px 20px 55px 35px 20px;grid-auto-rows:20px;gap:3px 0;padding:5px 0 0 2px;align-items:center;font-size:12px}
.cp b{font-weight:400;grid-column:span 3;white-space:nowrap}
.cp b+b{grid-column:span 2}
.cp label:nth-of-type(even){grid-column:4}
.cp label:nth-of-type(6){grid-column:1}
.cp .w{grid-column:1/-1}
.cp .l{grid-column:2}
.cp input{border-color:#ccc;color:#838383;text-align:left;padding:0 2px}
.arrows{position:absolute;inset:0;width:100%;height:100%;pointer-events:none;filter:drop-shadow(3px 4px 2px rgba(0,0,0,.35))}
```
